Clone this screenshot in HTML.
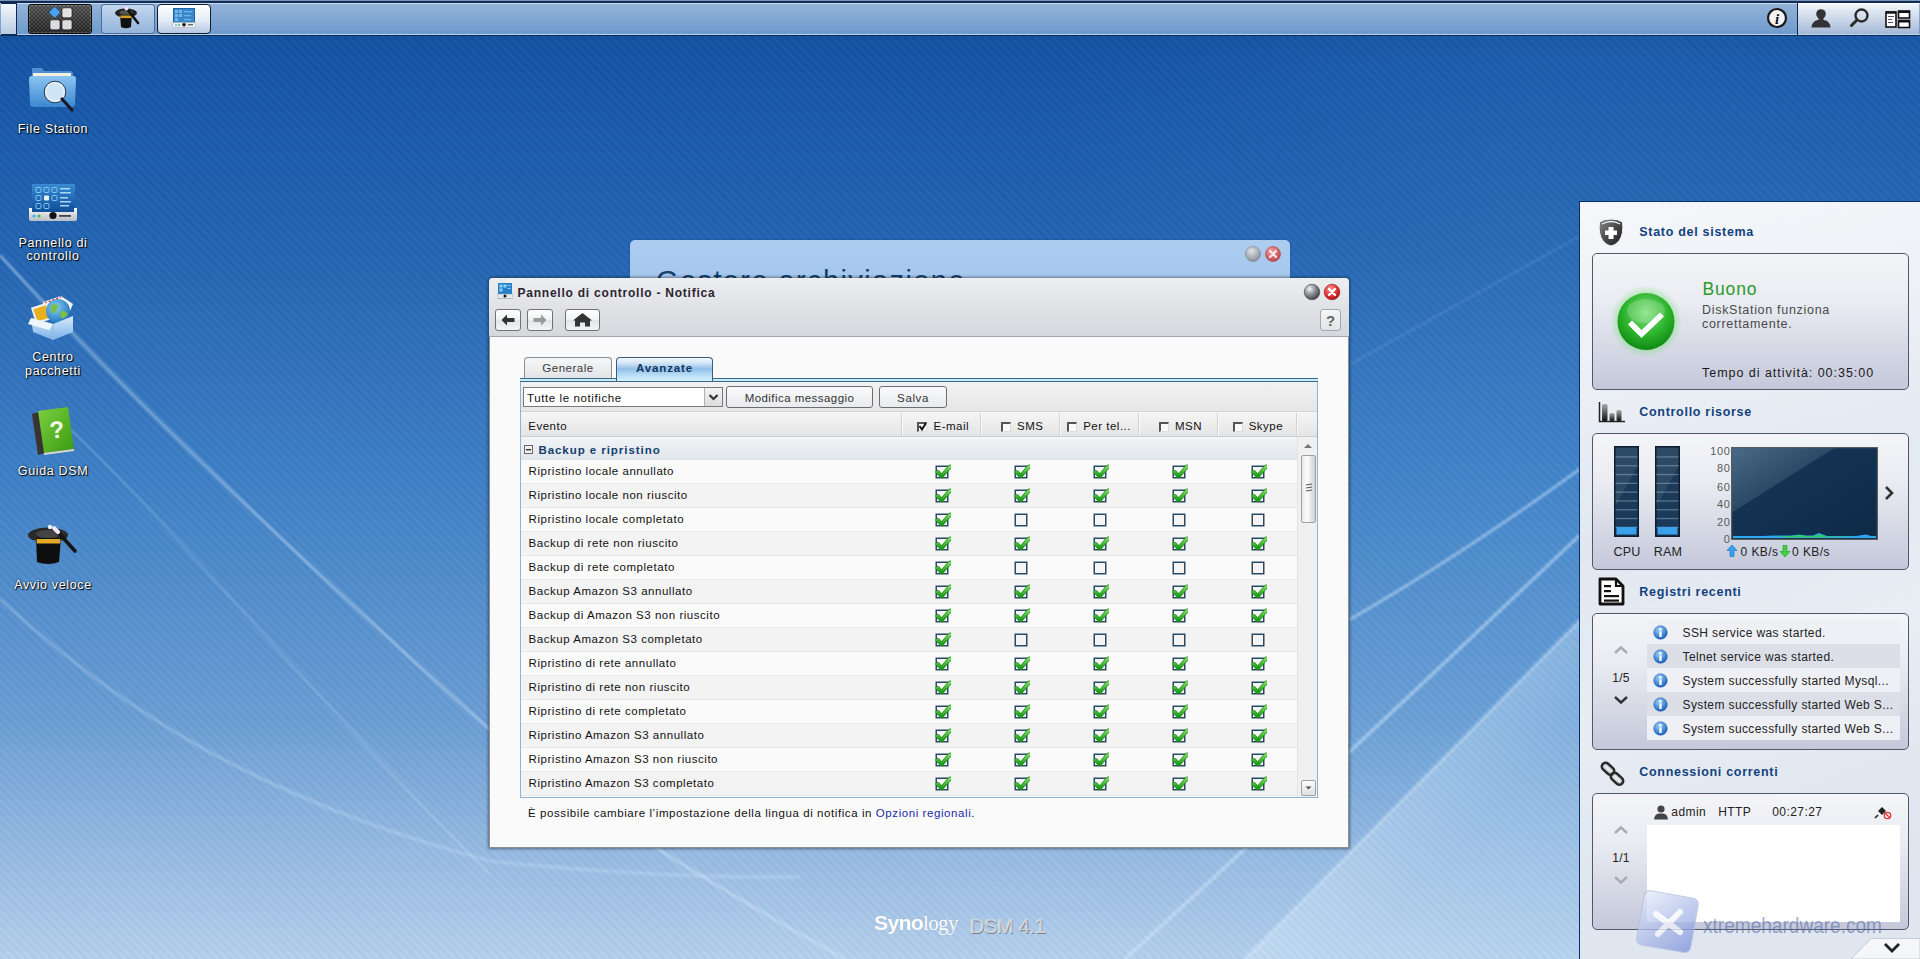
<!DOCTYPE html><html><head><meta charset="utf-8"><title>DSM</title><style>
*{margin:0;padding:0;box-sizing:border-box}
html,body{width:1920px;height:959px;overflow:hidden}
body{position:relative;font-family:"Liberation Sans",sans-serif;
background:linear-gradient(180deg,#0d4a96 0px,#1555a6 60px,#2364b2 250px,#3e80c6 480px,#6a9ed4 720px,#9cbee4 870px,#b4d0ec 959px);}
.t{position:absolute;white-space:nowrap}
.b{position:absolute}
.dl{color:#fff;text-shadow:0 0 2px #000,1px 1px 1px #000}
</style></head><body>
<svg class="b" style="left:0px;top:0px;pointer-events:none" width="1920" height="959" viewBox="0 0 1920 959"><defs><linearGradient id="beam" gradientUnits="userSpaceOnUse" x1="1412" y1="789" x2="1560" y2="937"><stop offset="0" stop-color="#e4f2ff" stop-opacity=".34"/><stop offset=".35" stop-color="#e4f2ff" stop-opacity=".2"/><stop offset="1" stop-color="#e4f2ff" stop-opacity=".14"/></linearGradient><filter id="bl" x="-10%" y="-10%" width="120%" height="120%"><feGaussianBlur stdDeviation="1.2"/></filter></defs><g filter="url(#bl)"><path d="M0,255 Q154,428 490,730 Q620,835 845,959" stroke="#d8ecff" stroke-opacity=".45" stroke-width="3" fill="none"/><path d="M0,599 C120,710 260,800 490,861 Q650,878 800,877" stroke="#d8ecff" stroke-opacity=".3" stroke-width="3" fill="none"/><path d="M60,420 C150,500 330,715 490,875" stroke="#d8ecff" stroke-opacity=".2" stroke-width="2.5" fill="none"/><path d="M1349,365 L1580,236" stroke="#d8ecff" stroke-opacity=".15" stroke-width="2" fill="none"/><path d="M1349,620 Q1460,556 1580,469" stroke="#d8ecff" stroke-opacity=".5" stroke-width="3" fill="none"/><path d="M1125,959 Q1300,800 1580,535" stroke="#d8ecff" stroke-opacity=".5" stroke-width="3.5" fill="none"/><path d="M1245,959 L1580,620" stroke="#e4f2ff" stroke-opacity=".3" stroke-width="4" fill="none"/></g><path d="M1245,959 L1580,620 L1580,959 Z" fill="url(#beam)"/></svg>
<div class="b" style="left:0px;top:36px;width:1920px;height:923px;background:repeating-linear-gradient(45deg,rgba(0,0,0,.022) 0 3px,rgba(255,255,255,.022) 3px 6px)"></div>
<div class="b" style="left:0px;top:36px;width:1920px;height:923px;background:linear-gradient(90deg,rgba(255,255,255,0) 0,rgba(255,255,255,0) 55%,rgba(120,200,255,.07) 80%,rgba(120,200,255,.05) 100%)"></div>
<div class="b" style="left:0px;top:0px;width:1920px;height:36px;background:linear-gradient(180deg,#7d94b6 0,#7d94b6 1px,#0f2c55 1px,#0f2c55 3px,#c8dcf2 3px,#c8dcf2 4px,#94b2d8 4px,#6e9bcc 34px,#b6d0ee 34px,#b6d0ee 35px,#0c2c5a 35px,#0c2c5a 36px)"></div>
<div class="b" style="left:1px;top:3px;width:16px;height:32px;background:linear-gradient(180deg,#f4f8fc,#d6e2f0 50%,#b8cce4);border:1px solid #0e2a50;border-left:0"></div>
<div class="b" style="left:28px;top:4px;width:64px;height:30px;background:linear-gradient(180deg,rgba(255,255,255,.15),rgba(0,0,0,.2)),repeating-conic-gradient(#4a4a4a 0 25%,#262626 0 50%) 0 0/4px 4px;border:1px solid #0a0a0a;border-radius:3px;box-shadow:inset 0 0 0 1px rgba(255,255,255,.15)"></div>
<svg class="b" style="left:46px;top:5px;" width="30" height="28" viewBox="0 0 30 28"><rect x="4.35" y="3.05" width="8.5" height="8.5" rx="1" transform="rotate(45 8.6 7.3)" fill="#4aa0f0" stroke="#1a3a5a" stroke-width=".6"/><rect x="16" y="2.8" width="10" height="10" rx="2" fill="#e2e2e4" stroke="#111" stroke-width=".6"/><rect x="4" y="14.8" width="10" height="10" rx="2" fill="#dcdcde" stroke="#111" stroke-width=".6"/><rect x="16" y="14.8" width="10" height="10" rx="2" fill="#dcdcde" stroke="#111" stroke-width=".6"/></svg>
<div class="b" style="left:101px;top:4px;width:54px;height:30px;background:linear-gradient(180deg,#c4d6ee,#94b4dc);border:1px solid #4a6c9c;border-radius:3px"></div>
<div class="b" style="left:157px;top:4px;width:54px;height:30px;background:linear-gradient(180deg,#ffffff,#e4ecf6 55%,#b4c8e4);border:1.5px solid #101c30;border-radius:4px"></div>
<div class="b" style="left:1797px;top:3px;width:1px;height:32px;background:#0f2c55"></div>
<div class="b" style="left:1798px;top:3px;width:121px;height:31px;background:linear-gradient(180deg,#f0f4fa,#c8d4e6 55%,#a4b8d8);border-top:1px solid #fff"></div>
<svg class="b" style="left:111px;top:3px;" width="34" height="28" viewBox="0 0 34 28"><ellipse cx="15" cy="10" rx="11" ry="4.5" fill="#222"/><ellipse cx="15" cy="9.5" rx="6.5" ry="2.3" fill="#555"/><path d="M9,12 L21,12 L20,24 Q15,26.5 10,24 Z" fill="#111"/><rect x="9.3" y="12.5" width="11.5" height="2.6" fill="#d8a020"/><path d="M16,6 L27,20" stroke="#111" stroke-width="2.6" stroke-linecap="round"/><circle cx="15.5" cy="5.5" r="2" fill="#f0e0ff"/></svg>
<svg class="b" style="left:170px;top:7px;" width="28" height="22" viewBox="0 0 28 22"><rect x="3" y="1" width="22" height="16" fill="#1e64ac"/><rect x="4" y="2" width="20" height="14" fill="#3a88cc"/><g fill="#8ccaf0" opacity=".7"><rect x="5" y="3" width="3" height="3"/><rect x="9" y="3" width="3" height="3"/><rect x="5" y="7" width="3" height="3"/><rect x="9" y="7" width="3" height="3"/><rect x="5" y="11" width="3" height="3"/><rect x="14" y="4" width="8" height="1.2"/><rect x="14" y="8" width="7" height="1.2"/><rect x="14" y="12" width="7" height="1.2"/></g><rect x="2.5" y="15.5" width="23" height="5" rx="1" fill="#eceff2" stroke="#a0a8b0" stroke-width=".5"/><circle cx="14" cy="17.8" r="1.8" fill="#111"/><circle cx="6" cy="18" r=".9" fill="#4ab0e8"/><circle cx="9" cy="18" r=".9" fill="#40c040"/><rect x="18" y="17.3" width="5" height="1" fill="#333"/></svg>
<svg class="b" style="left:1766px;top:7px;" width="22" height="22" viewBox="0 0 22 22"><circle cx="11" cy="11" r="9" fill="#f4f4f4" stroke="#1a1a1a" stroke-width="2.2"/><text x="11" y="16.5" text-anchor="middle" font-family="Liberation Serif" font-style="italic" font-weight="bold" font-size="15" fill="#111">i</text></svg>
<svg class="b" style="left:1810px;top:7px;" width="22" height="22" viewBox="0 0 22 22"><circle cx="11" cy="7" r="4.8" fill="#333"/><path d="M1.5,20.5 Q2,14 8,13 L14,13 Q20,14 20.5,20.5 Z" fill="#333"/><rect x="8.5" y="10" width="5" height="4" fill="#333"/></svg>
<svg class="b" style="left:1848px;top:7px;" width="24" height="22" viewBox="0 0 24 22"><circle cx="13.5" cy="8.5" r="6" fill="none" stroke="#2a2a2a" stroke-width="2.4"/><path d="M9.2,12.8 L3.5,18.5" stroke="#2a2a2a" stroke-width="3" stroke-linecap="round"/></svg>
<svg class="b" style="left:1885px;top:10px;" width="26" height="19" viewBox="0 0 26 19"><rect x="1" y="2" width="10" height="15" fill="#fff" stroke="#111" stroke-width="1.6"/><rect x="1" y="1.5" width="10" height="2.2" fill="#111"/><rect x="13.5" y="1" width="11" height="7" fill="#fff" stroke="#111" stroke-width="1.6"/><rect x="13.5" y="1" width="11" height="2" fill="#111"/><rect x="13.5" y="10.5" width="11" height="7" fill="#fff" stroke="#111" stroke-width="1.6"/><rect x="13.5" y="10.5" width="11" height="2" fill="#111"/><g fill="#555"><rect x="3" y="6" width="6" height="1"/><rect x="3" y="9" width="4" height="1"/><rect x="3" y="12" width="5" height="1"/></g></svg>
<svg class="b" style="left:26px;top:64px;" width="56" height="50" viewBox="0 0 56 50"><defs><linearGradient id="fold" x1="0" y1="0" x2="0" y2="1"><stop offset="0" stop-color="#8cc4f0"/><stop offset="1" stop-color="#3c88d0"/></linearGradient></defs><path d="M6,4 L16,4 L18,7 L44,7 Q47,7 47,10 L47,14 L6,14 Z" fill="#4c8ed0"/><rect x="7" y="9" width="38" height="8" fill="#f4f0e0"/><path d="M3,15 Q3,12 6,12 L47,12 Q50,12 50,15 L49,40 Q49,43 46,43 L7,43 Q4,43 4,40 Z" fill="url(#fold)"/><circle cx="29" cy="28" r="9.5" fill="#cfe4f6" stroke="#e8eef4" stroke-width="2.2"/><circle cx="29" cy="28" r="10.8" fill="none" stroke="#2a3a50" stroke-width="1"/><path d="M36,35 L46,46" stroke="#1a1a24" stroke-width="3.2" stroke-linecap="round"/></svg>
<div class="t" style="left:53px;transform:translateX(-50%);top:122.92px;font-size:12.5px;line-height:12.5px;color:#fff;letter-spacing:0.65px;text-shadow:1px 1px 1px #000,0 0 2px rgba(0,0,0,.8)">File Station</div>
<svg class="b" style="left:27px;top:182px;" width="52" height="42" viewBox="0 0 52 42"><defs><linearGradient id="cps" x1="0" y1="0" x2="0" y2="1"><stop offset="0" stop-color="#3a8ad4"/><stop offset="1" stop-color="#0e4e98"/></linearGradient><linearGradient id="cpb" x1="0" y1="0" x2="0" y2="1"><stop offset="0" stop-color="#fafafa"/><stop offset="1" stop-color="#b8bcc4"/></linearGradient></defs><rect x="5" y="2" width="43" height="28" fill="url(#cps)"/><g fill="none" stroke="#7cc8f0" stroke-width="1"><rect x="9" y="5.5" width="5" height="5" rx="1"/><rect x="17" y="5.5" width="5" height="5" rx="1"/><rect x="25" y="5.5" width="5" height="5" rx="1"/><rect x="9" y="13.5" width="5" height="5" rx="1"/><rect x="25" y="13.5" width="5" height="5" rx="1"/><rect x="9" y="21.5" width="5" height="5" rx="1"/><rect x="17" y="21.5" width="5" height="5" rx="1"/></g><rect x="17" y="13.5" width="5" height="5" rx="1" fill="#e8f4f0"/><g fill="#a8d8f8"><rect x="33" y="6" width="10" height="1.5"/><rect x="33" y="10" width="11" height="1.5"/><rect x="33" y="15" width="8" height="1.5"/><rect x="33" y="19" width="11" height="1.5"/><rect x="33" y="23" width="9" height="1.5"/></g><path d="M2,26 L2,37 Q2,39 4,39 L48,39 Q50,39 50,37 L50,26 L47,26 L47,30 L5,30 L5,26 Z" fill="url(#cpb)"/><circle cx="26" cy="33.5" r="3.6" fill="#111"/><circle cx="7" cy="34" r="1.6" fill="#40b0f0"/><circle cx="12" cy="34" r="1.6" fill="#40c040"/><rect x="32" y="33" width="12" height="1.8" fill="#444"/></svg>
<div class="t" style="left:53px;transform:translateX(-50%);top:236.92px;font-size:12.5px;line-height:12.5px;color:#fff;letter-spacing:0.65px;text-shadow:1px 1px 1px #000,0 0 2px rgba(0,0,0,.8)">Pannello di</div>
<div class="t" style="left:53px;transform:translateX(-50%);top:250.42px;font-size:12.5px;line-height:12.5px;color:#fff;letter-spacing:0.65px;text-shadow:1px 1px 1px #000,0 0 2px rgba(0,0,0,.8)">controllo</div>
<svg class="b" style="left:27px;top:292px;" width="52" height="52" viewBox="0 0 52 52"><defs><radialGradient id="glb" cx=".4" cy=".35" r=".7"><stop offset="0" stop-color="#8ad0f0"/><stop offset="1" stop-color="#1a70c0"/></radialGradient><linearGradient id="bx" x1="0" y1="0" x2="0" y2="1"><stop offset="0" stop-color="#d8ecfc"/><stop offset="1" stop-color="#7ab0e8"/></linearGradient></defs><path d="M16,10 L34,4 L46,12 L40,26 L20,26 Z" fill="#f4f4f4"/><path d="M18,11 L34,5" stroke="#c83030" stroke-width="1.5" stroke-dasharray="2 2"/><rect x="6" y="13" width="17" height="17" transform="rotate(-18 14 21)" fill="#f0f0f0"/><rect x="8" y="15" width="13" height="13" transform="rotate(-18 14 21)" fill="#e8b020"/><circle cx="31" cy="19" r="12" fill="url(#glb)"/><path d="M24,14 Q28,10 31,14 Q30,20 25,22 Z M33,20 Q38,17 41,22 Q38,27 34,26 Z" fill="#7cc040"/><path d="M4,26 L26,32 L46,24 L46,40 L26,48 L6,40 Z" fill="url(#bx)"/><path d="M26,32 L26,48" stroke="#90b8e0" stroke-width="1"/><path d="M4,26 L26,32 L22,38 L1,32 Z" fill="#eef6fe"/></svg>
<div class="t" style="left:53px;transform:translateX(-50%);top:351.42px;font-size:12.5px;line-height:12.5px;color:#fff;letter-spacing:0.65px;text-shadow:1px 1px 1px #000,0 0 2px rgba(0,0,0,.8)">Centro</div>
<div class="t" style="left:53px;transform:translateX(-50%);top:364.92px;font-size:12.5px;line-height:12.5px;color:#fff;letter-spacing:0.65px;text-shadow:1px 1px 1px #000,0 0 2px rgba(0,0,0,.8)">pacchetti</div>
<svg class="b" style="left:30px;top:405px;" width="46" height="52" viewBox="0 0 46 52"><defs><linearGradient id="bk" x1="0" y1="0" x2="1" y2="1"><stop offset="0" stop-color="#7cd040"/><stop offset="1" stop-color="#3a9a10"/></linearGradient></defs><path d="M2,9 L9,7 L15,48 L8,50 Z" fill="#3a3430"/><path d="M8,6 L38,2 L44,44 L14,48 Z" fill="url(#bk)"/><path d="M14,48 L44,44 L44,46 L14,50 Z" fill="#d8d8d0"/><text x="27" y="33" text-anchor="middle" font-family="Liberation Sans" font-weight="bold" font-size="24" fill="#f4fce8" transform="rotate(-6 27 25)">?</text></svg>
<div class="t" style="left:53px;transform:translateX(-50%);top:464.62px;font-size:12.5px;line-height:12.5px;color:#fff;letter-spacing:0.65px;text-shadow:1px 1px 1px #000,0 0 2px rgba(0,0,0,.8)">Guida DSM</div>
<svg class="b" style="left:26px;top:520px;" width="54" height="50" viewBox="0 0 54 50"><ellipse cx="22" cy="15" rx="20" ry="7.5" fill="#2a2a2a"/><ellipse cx="22" cy="14" rx="12" ry="4" fill="#444"/><path d="M10,18 L35,18 L33,42 Q22,46 11,42 Z" fill="#0e0e0e"/><path d="M10.5,19 L34.5,19 L34.2,23.5 L10.8,23.5 Z" fill="#e0a828"/><path d="M29,9 L49,31" stroke="#151515" stroke-width="3.6" stroke-linecap="round"/><path d="M28,8 L32,12" stroke="#f0e8ff" stroke-width="4" stroke-linecap="round"/><circle cx="24" cy="7" r="2.2" fill="#fff" opacity=".9"/></svg>
<div class="t" style="left:53px;transform:translateX(-50%);top:579.32px;font-size:12.5px;line-height:12.5px;color:#fff;letter-spacing:0.65px;text-shadow:1px 1px 1px #000,0 0 2px rgba(0,0,0,.8)">Avvio veloce</div>
<div class="t" style="left:874px;top:912.22px;font-size:21px;line-height:21px;color:#fff;letter-spacing:-0.6px;text-shadow:0 0 1px rgba(0,0,0,.2)"><span style="font-weight:bold">Syno</span><span style="font-family:'Liberation Serif'">logy</span></div>
<div class="t" style="left:970px;top:915.57px;font-size:20px;line-height:20px;color:#cdd1d6;letter-spacing:-0.3px;text-shadow:0.6px 0.8px 0 #76808c,-0.4px -0.4px 0 #f4f6f8">DSM 4.1</div>
<div class="b" style="left:630px;top:240px;width:660px;height:60px;background:linear-gradient(180deg,#accdf0,#a2c4ec);border-radius:5px 5px 0 0;box-shadow:0 0 2px rgba(0,0,0,.3);overflow:hidden"></div>
<div class="t" style="left:656px;top:267.45px;font-size:29px;line-height:29px;color:#14406e;letter-spacing:1.4px;">Gestore archiviazione</div>
<svg class="b" style="left:1244px;top:245px;" width="38" height="18" viewBox="0 0 38 18"><defs><radialGradient id="gb2" cx=".4" cy=".3" r=".7"><stop offset="0" stop-color="#e0e4e8"/><stop offset="1" stop-color="#8a9098"/></radialGradient><radialGradient id="rb2" cx=".4" cy=".3" r=".7"><stop offset="0" stop-color="#f0a0a0"/><stop offset="1" stop-color="#c04848"/></radialGradient></defs><circle cx="9" cy="9" r="7.5" fill="url(#gb2)" stroke="#7a8088" stroke-width=".6"/><circle cx="29" cy="9" r="7.5" fill="url(#rb2)" stroke="#b04040" stroke-width=".6"/><path d="M26,6 L32,12 M32,6 L26,12" stroke="#fde8e8" stroke-width="2.2" stroke-linecap="round"/></svg>
<div class="b" style="left:489px;top:278px;width:860px;height:570px;background:#fafafa;border-radius:4px 4px 0 0;box-shadow:0 0 3px 1px rgba(0,0,0,.42);border:1px solid #8a9096;border-top:0"></div>
<div class="b" style="left:489px;top:278px;width:860px;height:59px;background:linear-gradient(180deg,#eceef0 0,#e4e6e9 20px,#d4d8dc 58px);border-radius:4px 4px 0 0;border-bottom:1px solid #a4a8ac"></div>
<svg class="b" style="left:497px;top:283px;" width="16" height="16" viewBox="0 0 16 16"><rect x="1" y="0" width="14" height="11" fill="#2a80c8"/><g fill="#8ad4f8"><rect x="2.5" y="1.5" width="3" height="3"/><rect x="6.5" y="1.5" width="3" height="3"/><rect x="2.5" y="5.5" width="3" height="3"/><rect x="10.5" y="2" width="3" height="1"/><rect x="10.5" y="5" width="3" height="1"/></g><rect x="0" y="11" width="16" height="4.5" fill="#e4e8ec" stroke="#8a949e" stroke-width=".5"/><circle cx="8" cy="13" r="1.5" fill="#111"/></svg>
<div class="t" style="left:517.5px;top:286.84px;font-size:12px;line-height:12px;color:#2c2430;font-weight:bold;letter-spacing:0.77px;">Pannello di controllo - Notifica</div>
<svg class="b" style="left:1303px;top:283px;" width="40" height="18" viewBox="0 0 40 18"><defs><radialGradient id="gb" cx=".35" cy=".3" r=".75"><stop offset="0" stop-color="#f4f4f4"/><stop offset=".5" stop-color="#8a8e92"/><stop offset="1" stop-color="#3a3e42"/></radialGradient><radialGradient id="rb" cx=".4" cy=".3" r=".75"><stop offset="0" stop-color="#ff9a9a"/><stop offset=".6" stop-color="#e03030"/><stop offset="1" stop-color="#a01010"/></radialGradient></defs><circle cx="9" cy="9" r="7.8" fill="url(#gb)" stroke="#404448" stroke-width=".6"/><circle cx="29" cy="9" r="7.8" fill="url(#rb)" stroke="#901010" stroke-width=".6"/><path d="M26,6 L32,12 M32,6 L26,12" stroke="#fff" stroke-width="2.4" stroke-linecap="round"/></svg>
<div class="b" style="left:495px;top:309px;width:26px;height:22px;background:linear-gradient(180deg,#ffffff,#f0f2f4 50%,#e2e5e8 51%,#f2f4f6);border:1px solid #6e7276;border-radius:3px"></div>
<svg class="b" style="left:495px;top:309px;" width="26" height="22" viewBox="0 0 26 22"><path d="M6.5,11 L12,5.5 L12,9 L19.5,9 L19.5,13 L12,13 L12,16.5 Z" fill="#333"/></svg>
<div class="b" style="left:527px;top:309px;width:26px;height:22px;background:linear-gradient(180deg,#ffffff,#f0f2f4 50%,#e2e5e8 51%,#f2f4f6);border:1px solid #6e7276;border-radius:3px"></div>
<svg class="b" style="left:527px;top:309px;" width="26" height="22" viewBox="0 0 26 22"><path d="M19.5,11 L14,5.5 L14,9 L6.5,9 L6.5,13 L14,13 L14,16.5 Z" fill="#9a9a9a"/></svg>
<div class="b" style="left:565px;top:309px;width:35px;height:22px;background:linear-gradient(180deg,#ffffff,#f0f2f4 50%,#e2e5e8 51%,#f2f4f6);border:1px solid #6e7276;border-radius:3px"></div>
<svg class="b" style="left:565px;top:309px;" width="35" height="22" viewBox="0 0 35 22"><path d="M8,11.5 L17.5,4 L27,11.5 L25,11.5 L25,17.5 L20,17.5 L20,13.5 L15,13.5 L15,17.5 L10,17.5 L10,11.5 Z" fill="#333"/></svg>
<div class="b" style="left:1320px;top:309px;width:21px;height:22px;background:linear-gradient(180deg,#f4f5f6,#e2e4e7);border:1px solid #a4a8ac;border-radius:3px"></div>
<svg class="b" style="left:1320px;top:309px;" width="21" height="22" viewBox="0 0 21 22"><text x="10.5" y="16.5" text-anchor="middle" font-family="Liberation Sans" font-weight="bold" font-size="15" fill="#666">?</text></svg>
<div class="b" style="left:524px;top:357px;width:88px;height:22px;background:linear-gradient(180deg,#f6f7f8,#e0e3e6);border:1px solid #8a8e92;border-bottom:0;border-radius:4px 4px 0 0"></div>
<div class="t" style="left:568px;transform:translateX(-50%);top:363.07px;font-size:11.5px;line-height:11.5px;color:#3a3a3a;letter-spacing:0.5px;">Generale</div>
<div class="b" style="left:520px;top:378px;width:798px;height:4px;background:linear-gradient(180deg,#3a6888 0,#3a6888 1px,#c4ecfc 1px,#c4ecfc 3px,#3a6888 3px)"></div>
<div class="b" style="left:616px;top:357px;width:97px;height:24px;background:linear-gradient(180deg,#f4f9fe 0,#d4e6f6 5px,#92bfe8 11px,#b8dcf6 17px,#d4f0fe 23px);border:1px solid #3a5c7a;border-bottom:0;border-radius:4px 4px 0 0"></div>
<div class="t" style="left:664.5px;transform:translateX(-50%);top:363.07px;font-size:11.5px;line-height:11.5px;color:#10365e;font-weight:bold;letter-spacing:0.85px;">Avanzate</div>
<div class="b" style="left:520px;top:382px;width:798px;height:416px;background:#fafafa;border-left:1px solid #8cb4d8;border-right:1px solid #8cb4d8;border-bottom:1px solid #8cb4d8"></div>
<div class="b" style="left:521px;top:382px;width:796px;height:30px;background:linear-gradient(180deg,#f2f2f2,#e6e6e6);border-bottom:1px solid #d4d4d4"></div>
<div class="b" style="left:523px;top:387px;width:200px;height:20px;background:#fff;border:1px solid #7a7a7a"></div>
<div class="b" style="left:704px;top:388px;width:18px;height:18px;background:linear-gradient(180deg,#f4f4f4,#dcdcdc);border-left:1px solid #b0b0b0"></div>
<svg class="b" style="left:705px;top:388px;" width="17" height="18" viewBox="0 0 17 18"><path d="M4.5,7 L8.5,11 L12.5,7" fill="none" stroke="#333" stroke-width="2.2"/></svg>
<div class="t" style="left:527px;top:393.37px;font-size:11.5px;line-height:11.5px;color:#111;letter-spacing:0.6px;">Tutte le notifiche</div>
<div class="b" style="left:726px;top:386px;width:147px;height:22px;background:linear-gradient(180deg,#fafafa,#e8eaec);border:1px solid #6a6e72;border-radius:3px"></div>
<div class="t" style="left:799.5px;transform:translateX(-50%);top:393.07px;font-size:11.5px;line-height:11.5px;color:#333;letter-spacing:0.45px;">Modifica messaggio</div>
<div class="b" style="left:879px;top:386px;width:68px;height:22px;background:linear-gradient(180deg,#fafafa,#e8eaec);border:1px solid #6a6e72;border-radius:3px"></div>
<div class="t" style="left:913px;transform:translateX(-50%);top:393.07px;font-size:11.5px;line-height:11.5px;color:#333;letter-spacing:0.6px;">Salva</div>
<div class="b" style="left:521px;top:412px;width:796px;height:25px;background:linear-gradient(180deg,#f6f6f6,#e4e4e4);border-bottom:1px solid #cfcfcf"></div>
<div class="b" style="left:901px;top:413px;width:1px;height:23px;background:#d2d2d2;box-shadow:1px 0 0 #fafafa"></div>
<div class="b" style="left:980px;top:413px;width:1px;height:23px;background:#d2d2d2;box-shadow:1px 0 0 #fafafa"></div>
<div class="b" style="left:1059px;top:413px;width:1px;height:23px;background:#d2d2d2;box-shadow:1px 0 0 #fafafa"></div>
<div class="b" style="left:1138px;top:413px;width:1px;height:23px;background:#d2d2d2;box-shadow:1px 0 0 #fafafa"></div>
<div class="b" style="left:1217px;top:413px;width:1px;height:23px;background:#d2d2d2;box-shadow:1px 0 0 #fafafa"></div>
<div class="b" style="left:1296px;top:413px;width:1px;height:23px;background:#d2d2d2;box-shadow:1px 0 0 #fafafa"></div>
<div class="t" style="left:528.3px;top:420.87px;font-size:11.5px;line-height:11.5px;color:#111;letter-spacing:0.5px;">Evento</div>
<div class="b" style="left:917px;top:422px;width:10px;height:10px;background:#fafafa;border-top:2px solid #555;border-left:2px solid #555;border-right:1px solid #ddd;border-bottom:1px solid #ddd"></div>
<svg class="b" style="left:917px;top:421px;" width="11" height="11" viewBox="0 0 11 11"><path d="M2.5,5 L5,8.5 L9,2" fill="none" stroke="#111" stroke-width="2"/></svg>
<div class="t" style="left:933.5px;top:420.87px;font-size:11.5px;line-height:11.5px;color:#111;letter-spacing:0.5px;">E-mail</div>
<div class="b" style="left:1001px;top:422px;width:10px;height:10px;background:#fafafa;border-top:2px solid #555;border-left:2px solid #555;border-right:1px solid #ddd;border-bottom:1px solid #ddd"></div>
<div class="t" style="left:1017px;top:420.87px;font-size:11.5px;line-height:11.5px;color:#111;letter-spacing:0.5px;">SMS</div>
<div class="b" style="left:1067px;top:422px;width:10px;height:10px;background:#fafafa;border-top:2px solid #555;border-left:2px solid #555;border-right:1px solid #ddd;border-bottom:1px solid #ddd"></div>
<div class="t" style="left:1083.2px;top:420.87px;font-size:11.5px;line-height:11.5px;color:#111;letter-spacing:0.5px;">Per tel...</div>
<div class="b" style="left:1158.7px;top:422px;width:10px;height:10px;background:#fafafa;border-top:2px solid #555;border-left:2px solid #555;border-right:1px solid #ddd;border-bottom:1px solid #ddd"></div>
<div class="t" style="left:1175px;top:420.87px;font-size:11.5px;line-height:11.5px;color:#111;letter-spacing:0.5px;">MSN</div>
<div class="b" style="left:1233px;top:422px;width:10px;height:10px;background:#fafafa;border-top:2px solid #555;border-left:2px solid #555;border-right:1px solid #ddd;border-bottom:1px solid #ddd"></div>
<div class="t" style="left:1248.7px;top:420.87px;font-size:11.5px;line-height:11.5px;color:#111;letter-spacing:0.5px;">Skype</div>
<div class="b" style="left:521px;top:437px;width:776px;height:23px;background:linear-gradient(180deg,#f2f5f8,#e0e5ea)"></div>
<svg class="b" style="left:524px;top:445px;" width="10" height="10" viewBox="0 0 10 10"><rect x=".5" y=".5" width="8" height="8" fill="#f0f0f0" stroke="#666" stroke-width="1"/><rect x="2" y="4" width="5" height="1.4" fill="#333"/></svg>
<div class="t" style="left:538.4px;top:445.17px;font-size:11.5px;line-height:11.5px;color:#14406e;font-weight:bold;letter-spacing:0.95px;">Backup e ripristino</div>
<svg width="0" height="0" style="position:absolute"><defs><linearGradient id="cg" x1="0" y1="0" x2="0" y2="1"><stop offset="0" stop-color="#7ee060"/><stop offset="1" stop-color="#1a9a18"/></linearGradient></defs></svg>
<div class="b" style="left:521px;top:460px;width:776px;height:24px;background:#fafafa;border-bottom:1px solid #e8e8e8"></div>
<div class="t" style="left:528.6px;top:466.27px;font-size:11.5px;line-height:11.5px;color:#111;letter-spacing:0.53px;">Ripristino locale annullato</div>
<svg class="b" style="left:935.0px;top:463px;" width="16" height="16" viewBox="0 0 16 16"><rect x="1.25" y="3.25" width="11.5" height="11.5" fill="#f4f4f4" stroke="#2a4a64" stroke-width="1.5"/><path d="M2.6,9 L6.6,13.2 L15,3.6" fill="none" stroke="#1c8e1a" stroke-width="4" stroke-linejoin="round" stroke-linecap="round"/><path d="M2.6,9 L6.6,13.2 L15,3.6" fill="none" stroke="url(#cg)" stroke-width="2.6" stroke-linejoin="round" stroke-linecap="round"/></svg>
<svg class="b" style="left:1014.0px;top:463px;" width="16" height="16" viewBox="0 0 16 16"><rect x="1.25" y="3.25" width="11.5" height="11.5" fill="#f4f4f4" stroke="#2a4a64" stroke-width="1.5"/><path d="M2.6,9 L6.6,13.2 L15,3.6" fill="none" stroke="#1c8e1a" stroke-width="4" stroke-linejoin="round" stroke-linecap="round"/><path d="M2.6,9 L6.6,13.2 L15,3.6" fill="none" stroke="url(#cg)" stroke-width="2.6" stroke-linejoin="round" stroke-linecap="round"/></svg>
<svg class="b" style="left:1093.0px;top:463px;" width="16" height="16" viewBox="0 0 16 16"><rect x="1.25" y="3.25" width="11.5" height="11.5" fill="#f4f4f4" stroke="#2a4a64" stroke-width="1.5"/><path d="M2.6,9 L6.6,13.2 L15,3.6" fill="none" stroke="#1c8e1a" stroke-width="4" stroke-linejoin="round" stroke-linecap="round"/><path d="M2.6,9 L6.6,13.2 L15,3.6" fill="none" stroke="url(#cg)" stroke-width="2.6" stroke-linejoin="round" stroke-linecap="round"/></svg>
<svg class="b" style="left:1172.0px;top:463px;" width="16" height="16" viewBox="0 0 16 16"><rect x="1.25" y="3.25" width="11.5" height="11.5" fill="#f4f4f4" stroke="#2a4a64" stroke-width="1.5"/><path d="M2.6,9 L6.6,13.2 L15,3.6" fill="none" stroke="#1c8e1a" stroke-width="4" stroke-linejoin="round" stroke-linecap="round"/><path d="M2.6,9 L6.6,13.2 L15,3.6" fill="none" stroke="url(#cg)" stroke-width="2.6" stroke-linejoin="round" stroke-linecap="round"/></svg>
<svg class="b" style="left:1251.0px;top:463px;" width="16" height="16" viewBox="0 0 16 16"><rect x="1.25" y="3.25" width="11.5" height="11.5" fill="#f4f4f4" stroke="#2a4a64" stroke-width="1.5"/><path d="M2.6,9 L6.6,13.2 L15,3.6" fill="none" stroke="#1c8e1a" stroke-width="4" stroke-linejoin="round" stroke-linecap="round"/><path d="M2.6,9 L6.6,13.2 L15,3.6" fill="none" stroke="url(#cg)" stroke-width="2.6" stroke-linejoin="round" stroke-linecap="round"/></svg>
<div class="b" style="left:521px;top:484px;width:776px;height:24px;background:#f3f3f3;border-bottom:1px solid #e8e8e8"></div>
<div class="t" style="left:528.6px;top:490.27px;font-size:11.5px;line-height:11.5px;color:#111;letter-spacing:0.53px;">Ripristino locale non riuscito</div>
<svg class="b" style="left:935.0px;top:487px;" width="16" height="16" viewBox="0 0 16 16"><rect x="1.25" y="3.25" width="11.5" height="11.5" fill="#f4f4f4" stroke="#2a4a64" stroke-width="1.5"/><path d="M2.6,9 L6.6,13.2 L15,3.6" fill="none" stroke="#1c8e1a" stroke-width="4" stroke-linejoin="round" stroke-linecap="round"/><path d="M2.6,9 L6.6,13.2 L15,3.6" fill="none" stroke="url(#cg)" stroke-width="2.6" stroke-linejoin="round" stroke-linecap="round"/></svg>
<svg class="b" style="left:1014.0px;top:487px;" width="16" height="16" viewBox="0 0 16 16"><rect x="1.25" y="3.25" width="11.5" height="11.5" fill="#f4f4f4" stroke="#2a4a64" stroke-width="1.5"/><path d="M2.6,9 L6.6,13.2 L15,3.6" fill="none" stroke="#1c8e1a" stroke-width="4" stroke-linejoin="round" stroke-linecap="round"/><path d="M2.6,9 L6.6,13.2 L15,3.6" fill="none" stroke="url(#cg)" stroke-width="2.6" stroke-linejoin="round" stroke-linecap="round"/></svg>
<svg class="b" style="left:1093.0px;top:487px;" width="16" height="16" viewBox="0 0 16 16"><rect x="1.25" y="3.25" width="11.5" height="11.5" fill="#f4f4f4" stroke="#2a4a64" stroke-width="1.5"/><path d="M2.6,9 L6.6,13.2 L15,3.6" fill="none" stroke="#1c8e1a" stroke-width="4" stroke-linejoin="round" stroke-linecap="round"/><path d="M2.6,9 L6.6,13.2 L15,3.6" fill="none" stroke="url(#cg)" stroke-width="2.6" stroke-linejoin="round" stroke-linecap="round"/></svg>
<svg class="b" style="left:1172.0px;top:487px;" width="16" height="16" viewBox="0 0 16 16"><rect x="1.25" y="3.25" width="11.5" height="11.5" fill="#f4f4f4" stroke="#2a4a64" stroke-width="1.5"/><path d="M2.6,9 L6.6,13.2 L15,3.6" fill="none" stroke="#1c8e1a" stroke-width="4" stroke-linejoin="round" stroke-linecap="round"/><path d="M2.6,9 L6.6,13.2 L15,3.6" fill="none" stroke="url(#cg)" stroke-width="2.6" stroke-linejoin="round" stroke-linecap="round"/></svg>
<svg class="b" style="left:1251.0px;top:487px;" width="16" height="16" viewBox="0 0 16 16"><rect x="1.25" y="3.25" width="11.5" height="11.5" fill="#f4f4f4" stroke="#2a4a64" stroke-width="1.5"/><path d="M2.6,9 L6.6,13.2 L15,3.6" fill="none" stroke="#1c8e1a" stroke-width="4" stroke-linejoin="round" stroke-linecap="round"/><path d="M2.6,9 L6.6,13.2 L15,3.6" fill="none" stroke="url(#cg)" stroke-width="2.6" stroke-linejoin="round" stroke-linecap="round"/></svg>
<div class="b" style="left:521px;top:508px;width:776px;height:24px;background:#fafafa;border-bottom:1px solid #e8e8e8"></div>
<div class="t" style="left:528.6px;top:514.27px;font-size:11.5px;line-height:11.5px;color:#111;letter-spacing:0.53px;">Ripristino locale completato</div>
<svg class="b" style="left:935.0px;top:511px;" width="16" height="16" viewBox="0 0 16 16"><rect x="1.25" y="3.25" width="11.5" height="11.5" fill="#f4f4f4" stroke="#2a4a64" stroke-width="1.5"/><path d="M2.6,9 L6.6,13.2 L15,3.6" fill="none" stroke="#1c8e1a" stroke-width="4" stroke-linejoin="round" stroke-linecap="round"/><path d="M2.6,9 L6.6,13.2 L15,3.6" fill="none" stroke="url(#cg)" stroke-width="2.6" stroke-linejoin="round" stroke-linecap="round"/></svg>
<svg class="b" style="left:1014.0px;top:511px;" width="16" height="16" viewBox="0 0 16 16"><rect x="1.25" y="3.25" width="11.5" height="11.5" fill="#f4f4f4" stroke="#2a4a64" stroke-width="1.5"/></svg>
<svg class="b" style="left:1093.0px;top:511px;" width="16" height="16" viewBox="0 0 16 16"><rect x="1.25" y="3.25" width="11.5" height="11.5" fill="#f4f4f4" stroke="#2a4a64" stroke-width="1.5"/></svg>
<svg class="b" style="left:1172.0px;top:511px;" width="16" height="16" viewBox="0 0 16 16"><rect x="1.25" y="3.25" width="11.5" height="11.5" fill="#f4f4f4" stroke="#2a4a64" stroke-width="1.5"/></svg>
<svg class="b" style="left:1251.0px;top:511px;" width="16" height="16" viewBox="0 0 16 16"><rect x="1.25" y="3.25" width="11.5" height="11.5" fill="#f4f4f4" stroke="#2a4a64" stroke-width="1.5"/></svg>
<div class="b" style="left:521px;top:532px;width:776px;height:24px;background:#f3f3f3;border-bottom:1px solid #e8e8e8"></div>
<div class="t" style="left:528.6px;top:538.27px;font-size:11.5px;line-height:11.5px;color:#111;letter-spacing:0.53px;">Backup di rete non riuscito</div>
<svg class="b" style="left:935.0px;top:535px;" width="16" height="16" viewBox="0 0 16 16"><rect x="1.25" y="3.25" width="11.5" height="11.5" fill="#f4f4f4" stroke="#2a4a64" stroke-width="1.5"/><path d="M2.6,9 L6.6,13.2 L15,3.6" fill="none" stroke="#1c8e1a" stroke-width="4" stroke-linejoin="round" stroke-linecap="round"/><path d="M2.6,9 L6.6,13.2 L15,3.6" fill="none" stroke="url(#cg)" stroke-width="2.6" stroke-linejoin="round" stroke-linecap="round"/></svg>
<svg class="b" style="left:1014.0px;top:535px;" width="16" height="16" viewBox="0 0 16 16"><rect x="1.25" y="3.25" width="11.5" height="11.5" fill="#f4f4f4" stroke="#2a4a64" stroke-width="1.5"/><path d="M2.6,9 L6.6,13.2 L15,3.6" fill="none" stroke="#1c8e1a" stroke-width="4" stroke-linejoin="round" stroke-linecap="round"/><path d="M2.6,9 L6.6,13.2 L15,3.6" fill="none" stroke="url(#cg)" stroke-width="2.6" stroke-linejoin="round" stroke-linecap="round"/></svg>
<svg class="b" style="left:1093.0px;top:535px;" width="16" height="16" viewBox="0 0 16 16"><rect x="1.25" y="3.25" width="11.5" height="11.5" fill="#f4f4f4" stroke="#2a4a64" stroke-width="1.5"/><path d="M2.6,9 L6.6,13.2 L15,3.6" fill="none" stroke="#1c8e1a" stroke-width="4" stroke-linejoin="round" stroke-linecap="round"/><path d="M2.6,9 L6.6,13.2 L15,3.6" fill="none" stroke="url(#cg)" stroke-width="2.6" stroke-linejoin="round" stroke-linecap="round"/></svg>
<svg class="b" style="left:1172.0px;top:535px;" width="16" height="16" viewBox="0 0 16 16"><rect x="1.25" y="3.25" width="11.5" height="11.5" fill="#f4f4f4" stroke="#2a4a64" stroke-width="1.5"/><path d="M2.6,9 L6.6,13.2 L15,3.6" fill="none" stroke="#1c8e1a" stroke-width="4" stroke-linejoin="round" stroke-linecap="round"/><path d="M2.6,9 L6.6,13.2 L15,3.6" fill="none" stroke="url(#cg)" stroke-width="2.6" stroke-linejoin="round" stroke-linecap="round"/></svg>
<svg class="b" style="left:1251.0px;top:535px;" width="16" height="16" viewBox="0 0 16 16"><rect x="1.25" y="3.25" width="11.5" height="11.5" fill="#f4f4f4" stroke="#2a4a64" stroke-width="1.5"/><path d="M2.6,9 L6.6,13.2 L15,3.6" fill="none" stroke="#1c8e1a" stroke-width="4" stroke-linejoin="round" stroke-linecap="round"/><path d="M2.6,9 L6.6,13.2 L15,3.6" fill="none" stroke="url(#cg)" stroke-width="2.6" stroke-linejoin="round" stroke-linecap="round"/></svg>
<div class="b" style="left:521px;top:556px;width:776px;height:24px;background:#fafafa;border-bottom:1px solid #e8e8e8"></div>
<div class="t" style="left:528.6px;top:562.27px;font-size:11.5px;line-height:11.5px;color:#111;letter-spacing:0.53px;">Backup di rete completato</div>
<svg class="b" style="left:935.0px;top:559px;" width="16" height="16" viewBox="0 0 16 16"><rect x="1.25" y="3.25" width="11.5" height="11.5" fill="#f4f4f4" stroke="#2a4a64" stroke-width="1.5"/><path d="M2.6,9 L6.6,13.2 L15,3.6" fill="none" stroke="#1c8e1a" stroke-width="4" stroke-linejoin="round" stroke-linecap="round"/><path d="M2.6,9 L6.6,13.2 L15,3.6" fill="none" stroke="url(#cg)" stroke-width="2.6" stroke-linejoin="round" stroke-linecap="round"/></svg>
<svg class="b" style="left:1014.0px;top:559px;" width="16" height="16" viewBox="0 0 16 16"><rect x="1.25" y="3.25" width="11.5" height="11.5" fill="#f4f4f4" stroke="#2a4a64" stroke-width="1.5"/></svg>
<svg class="b" style="left:1093.0px;top:559px;" width="16" height="16" viewBox="0 0 16 16"><rect x="1.25" y="3.25" width="11.5" height="11.5" fill="#f4f4f4" stroke="#2a4a64" stroke-width="1.5"/></svg>
<svg class="b" style="left:1172.0px;top:559px;" width="16" height="16" viewBox="0 0 16 16"><rect x="1.25" y="3.25" width="11.5" height="11.5" fill="#f4f4f4" stroke="#2a4a64" stroke-width="1.5"/></svg>
<svg class="b" style="left:1251.0px;top:559px;" width="16" height="16" viewBox="0 0 16 16"><rect x="1.25" y="3.25" width="11.5" height="11.5" fill="#f4f4f4" stroke="#2a4a64" stroke-width="1.5"/></svg>
<div class="b" style="left:521px;top:580px;width:776px;height:24px;background:#f3f3f3;border-bottom:1px solid #e8e8e8"></div>
<div class="t" style="left:528.6px;top:586.27px;font-size:11.5px;line-height:11.5px;color:#111;letter-spacing:0.53px;">Backup Amazon S3 annullato</div>
<svg class="b" style="left:935.0px;top:583px;" width="16" height="16" viewBox="0 0 16 16"><rect x="1.25" y="3.25" width="11.5" height="11.5" fill="#f4f4f4" stroke="#2a4a64" stroke-width="1.5"/><path d="M2.6,9 L6.6,13.2 L15,3.6" fill="none" stroke="#1c8e1a" stroke-width="4" stroke-linejoin="round" stroke-linecap="round"/><path d="M2.6,9 L6.6,13.2 L15,3.6" fill="none" stroke="url(#cg)" stroke-width="2.6" stroke-linejoin="round" stroke-linecap="round"/></svg>
<svg class="b" style="left:1014.0px;top:583px;" width="16" height="16" viewBox="0 0 16 16"><rect x="1.25" y="3.25" width="11.5" height="11.5" fill="#f4f4f4" stroke="#2a4a64" stroke-width="1.5"/><path d="M2.6,9 L6.6,13.2 L15,3.6" fill="none" stroke="#1c8e1a" stroke-width="4" stroke-linejoin="round" stroke-linecap="round"/><path d="M2.6,9 L6.6,13.2 L15,3.6" fill="none" stroke="url(#cg)" stroke-width="2.6" stroke-linejoin="round" stroke-linecap="round"/></svg>
<svg class="b" style="left:1093.0px;top:583px;" width="16" height="16" viewBox="0 0 16 16"><rect x="1.25" y="3.25" width="11.5" height="11.5" fill="#f4f4f4" stroke="#2a4a64" stroke-width="1.5"/><path d="M2.6,9 L6.6,13.2 L15,3.6" fill="none" stroke="#1c8e1a" stroke-width="4" stroke-linejoin="round" stroke-linecap="round"/><path d="M2.6,9 L6.6,13.2 L15,3.6" fill="none" stroke="url(#cg)" stroke-width="2.6" stroke-linejoin="round" stroke-linecap="round"/></svg>
<svg class="b" style="left:1172.0px;top:583px;" width="16" height="16" viewBox="0 0 16 16"><rect x="1.25" y="3.25" width="11.5" height="11.5" fill="#f4f4f4" stroke="#2a4a64" stroke-width="1.5"/><path d="M2.6,9 L6.6,13.2 L15,3.6" fill="none" stroke="#1c8e1a" stroke-width="4" stroke-linejoin="round" stroke-linecap="round"/><path d="M2.6,9 L6.6,13.2 L15,3.6" fill="none" stroke="url(#cg)" stroke-width="2.6" stroke-linejoin="round" stroke-linecap="round"/></svg>
<svg class="b" style="left:1251.0px;top:583px;" width="16" height="16" viewBox="0 0 16 16"><rect x="1.25" y="3.25" width="11.5" height="11.5" fill="#f4f4f4" stroke="#2a4a64" stroke-width="1.5"/><path d="M2.6,9 L6.6,13.2 L15,3.6" fill="none" stroke="#1c8e1a" stroke-width="4" stroke-linejoin="round" stroke-linecap="round"/><path d="M2.6,9 L6.6,13.2 L15,3.6" fill="none" stroke="url(#cg)" stroke-width="2.6" stroke-linejoin="round" stroke-linecap="round"/></svg>
<div class="b" style="left:521px;top:604px;width:776px;height:24px;background:#fafafa;border-bottom:1px solid #e8e8e8"></div>
<div class="t" style="left:528.6px;top:610.27px;font-size:11.5px;line-height:11.5px;color:#111;letter-spacing:0.53px;">Backup di Amazon S3 non riuscito</div>
<svg class="b" style="left:935.0px;top:607px;" width="16" height="16" viewBox="0 0 16 16"><rect x="1.25" y="3.25" width="11.5" height="11.5" fill="#f4f4f4" stroke="#2a4a64" stroke-width="1.5"/><path d="M2.6,9 L6.6,13.2 L15,3.6" fill="none" stroke="#1c8e1a" stroke-width="4" stroke-linejoin="round" stroke-linecap="round"/><path d="M2.6,9 L6.6,13.2 L15,3.6" fill="none" stroke="url(#cg)" stroke-width="2.6" stroke-linejoin="round" stroke-linecap="round"/></svg>
<svg class="b" style="left:1014.0px;top:607px;" width="16" height="16" viewBox="0 0 16 16"><rect x="1.25" y="3.25" width="11.5" height="11.5" fill="#f4f4f4" stroke="#2a4a64" stroke-width="1.5"/><path d="M2.6,9 L6.6,13.2 L15,3.6" fill="none" stroke="#1c8e1a" stroke-width="4" stroke-linejoin="round" stroke-linecap="round"/><path d="M2.6,9 L6.6,13.2 L15,3.6" fill="none" stroke="url(#cg)" stroke-width="2.6" stroke-linejoin="round" stroke-linecap="round"/></svg>
<svg class="b" style="left:1093.0px;top:607px;" width="16" height="16" viewBox="0 0 16 16"><rect x="1.25" y="3.25" width="11.5" height="11.5" fill="#f4f4f4" stroke="#2a4a64" stroke-width="1.5"/><path d="M2.6,9 L6.6,13.2 L15,3.6" fill="none" stroke="#1c8e1a" stroke-width="4" stroke-linejoin="round" stroke-linecap="round"/><path d="M2.6,9 L6.6,13.2 L15,3.6" fill="none" stroke="url(#cg)" stroke-width="2.6" stroke-linejoin="round" stroke-linecap="round"/></svg>
<svg class="b" style="left:1172.0px;top:607px;" width="16" height="16" viewBox="0 0 16 16"><rect x="1.25" y="3.25" width="11.5" height="11.5" fill="#f4f4f4" stroke="#2a4a64" stroke-width="1.5"/><path d="M2.6,9 L6.6,13.2 L15,3.6" fill="none" stroke="#1c8e1a" stroke-width="4" stroke-linejoin="round" stroke-linecap="round"/><path d="M2.6,9 L6.6,13.2 L15,3.6" fill="none" stroke="url(#cg)" stroke-width="2.6" stroke-linejoin="round" stroke-linecap="round"/></svg>
<svg class="b" style="left:1251.0px;top:607px;" width="16" height="16" viewBox="0 0 16 16"><rect x="1.25" y="3.25" width="11.5" height="11.5" fill="#f4f4f4" stroke="#2a4a64" stroke-width="1.5"/><path d="M2.6,9 L6.6,13.2 L15,3.6" fill="none" stroke="#1c8e1a" stroke-width="4" stroke-linejoin="round" stroke-linecap="round"/><path d="M2.6,9 L6.6,13.2 L15,3.6" fill="none" stroke="url(#cg)" stroke-width="2.6" stroke-linejoin="round" stroke-linecap="round"/></svg>
<div class="b" style="left:521px;top:628px;width:776px;height:24px;background:#f3f3f3;border-bottom:1px solid #e8e8e8"></div>
<div class="t" style="left:528.6px;top:634.27px;font-size:11.5px;line-height:11.5px;color:#111;letter-spacing:0.53px;">Backup Amazon S3 completato</div>
<svg class="b" style="left:935.0px;top:631px;" width="16" height="16" viewBox="0 0 16 16"><rect x="1.25" y="3.25" width="11.5" height="11.5" fill="#f4f4f4" stroke="#2a4a64" stroke-width="1.5"/><path d="M2.6,9 L6.6,13.2 L15,3.6" fill="none" stroke="#1c8e1a" stroke-width="4" stroke-linejoin="round" stroke-linecap="round"/><path d="M2.6,9 L6.6,13.2 L15,3.6" fill="none" stroke="url(#cg)" stroke-width="2.6" stroke-linejoin="round" stroke-linecap="round"/></svg>
<svg class="b" style="left:1014.0px;top:631px;" width="16" height="16" viewBox="0 0 16 16"><rect x="1.25" y="3.25" width="11.5" height="11.5" fill="#f4f4f4" stroke="#2a4a64" stroke-width="1.5"/></svg>
<svg class="b" style="left:1093.0px;top:631px;" width="16" height="16" viewBox="0 0 16 16"><rect x="1.25" y="3.25" width="11.5" height="11.5" fill="#f4f4f4" stroke="#2a4a64" stroke-width="1.5"/></svg>
<svg class="b" style="left:1172.0px;top:631px;" width="16" height="16" viewBox="0 0 16 16"><rect x="1.25" y="3.25" width="11.5" height="11.5" fill="#f4f4f4" stroke="#2a4a64" stroke-width="1.5"/></svg>
<svg class="b" style="left:1251.0px;top:631px;" width="16" height="16" viewBox="0 0 16 16"><rect x="1.25" y="3.25" width="11.5" height="11.5" fill="#f4f4f4" stroke="#2a4a64" stroke-width="1.5"/></svg>
<div class="b" style="left:521px;top:652px;width:776px;height:24px;background:#fafafa;border-bottom:1px solid #e8e8e8"></div>
<div class="t" style="left:528.6px;top:658.27px;font-size:11.5px;line-height:11.5px;color:#111;letter-spacing:0.53px;">Ripristino di rete annullato</div>
<svg class="b" style="left:935.0px;top:655px;" width="16" height="16" viewBox="0 0 16 16"><rect x="1.25" y="3.25" width="11.5" height="11.5" fill="#f4f4f4" stroke="#2a4a64" stroke-width="1.5"/><path d="M2.6,9 L6.6,13.2 L15,3.6" fill="none" stroke="#1c8e1a" stroke-width="4" stroke-linejoin="round" stroke-linecap="round"/><path d="M2.6,9 L6.6,13.2 L15,3.6" fill="none" stroke="url(#cg)" stroke-width="2.6" stroke-linejoin="round" stroke-linecap="round"/></svg>
<svg class="b" style="left:1014.0px;top:655px;" width="16" height="16" viewBox="0 0 16 16"><rect x="1.25" y="3.25" width="11.5" height="11.5" fill="#f4f4f4" stroke="#2a4a64" stroke-width="1.5"/><path d="M2.6,9 L6.6,13.2 L15,3.6" fill="none" stroke="#1c8e1a" stroke-width="4" stroke-linejoin="round" stroke-linecap="round"/><path d="M2.6,9 L6.6,13.2 L15,3.6" fill="none" stroke="url(#cg)" stroke-width="2.6" stroke-linejoin="round" stroke-linecap="round"/></svg>
<svg class="b" style="left:1093.0px;top:655px;" width="16" height="16" viewBox="0 0 16 16"><rect x="1.25" y="3.25" width="11.5" height="11.5" fill="#f4f4f4" stroke="#2a4a64" stroke-width="1.5"/><path d="M2.6,9 L6.6,13.2 L15,3.6" fill="none" stroke="#1c8e1a" stroke-width="4" stroke-linejoin="round" stroke-linecap="round"/><path d="M2.6,9 L6.6,13.2 L15,3.6" fill="none" stroke="url(#cg)" stroke-width="2.6" stroke-linejoin="round" stroke-linecap="round"/></svg>
<svg class="b" style="left:1172.0px;top:655px;" width="16" height="16" viewBox="0 0 16 16"><rect x="1.25" y="3.25" width="11.5" height="11.5" fill="#f4f4f4" stroke="#2a4a64" stroke-width="1.5"/><path d="M2.6,9 L6.6,13.2 L15,3.6" fill="none" stroke="#1c8e1a" stroke-width="4" stroke-linejoin="round" stroke-linecap="round"/><path d="M2.6,9 L6.6,13.2 L15,3.6" fill="none" stroke="url(#cg)" stroke-width="2.6" stroke-linejoin="round" stroke-linecap="round"/></svg>
<svg class="b" style="left:1251.0px;top:655px;" width="16" height="16" viewBox="0 0 16 16"><rect x="1.25" y="3.25" width="11.5" height="11.5" fill="#f4f4f4" stroke="#2a4a64" stroke-width="1.5"/><path d="M2.6,9 L6.6,13.2 L15,3.6" fill="none" stroke="#1c8e1a" stroke-width="4" stroke-linejoin="round" stroke-linecap="round"/><path d="M2.6,9 L6.6,13.2 L15,3.6" fill="none" stroke="url(#cg)" stroke-width="2.6" stroke-linejoin="round" stroke-linecap="round"/></svg>
<div class="b" style="left:521px;top:676px;width:776px;height:24px;background:#f3f3f3;border-bottom:1px solid #e8e8e8"></div>
<div class="t" style="left:528.6px;top:682.27px;font-size:11.5px;line-height:11.5px;color:#111;letter-spacing:0.53px;">Ripristino di rete non riuscito</div>
<svg class="b" style="left:935.0px;top:679px;" width="16" height="16" viewBox="0 0 16 16"><rect x="1.25" y="3.25" width="11.5" height="11.5" fill="#f4f4f4" stroke="#2a4a64" stroke-width="1.5"/><path d="M2.6,9 L6.6,13.2 L15,3.6" fill="none" stroke="#1c8e1a" stroke-width="4" stroke-linejoin="round" stroke-linecap="round"/><path d="M2.6,9 L6.6,13.2 L15,3.6" fill="none" stroke="url(#cg)" stroke-width="2.6" stroke-linejoin="round" stroke-linecap="round"/></svg>
<svg class="b" style="left:1014.0px;top:679px;" width="16" height="16" viewBox="0 0 16 16"><rect x="1.25" y="3.25" width="11.5" height="11.5" fill="#f4f4f4" stroke="#2a4a64" stroke-width="1.5"/><path d="M2.6,9 L6.6,13.2 L15,3.6" fill="none" stroke="#1c8e1a" stroke-width="4" stroke-linejoin="round" stroke-linecap="round"/><path d="M2.6,9 L6.6,13.2 L15,3.6" fill="none" stroke="url(#cg)" stroke-width="2.6" stroke-linejoin="round" stroke-linecap="round"/></svg>
<svg class="b" style="left:1093.0px;top:679px;" width="16" height="16" viewBox="0 0 16 16"><rect x="1.25" y="3.25" width="11.5" height="11.5" fill="#f4f4f4" stroke="#2a4a64" stroke-width="1.5"/><path d="M2.6,9 L6.6,13.2 L15,3.6" fill="none" stroke="#1c8e1a" stroke-width="4" stroke-linejoin="round" stroke-linecap="round"/><path d="M2.6,9 L6.6,13.2 L15,3.6" fill="none" stroke="url(#cg)" stroke-width="2.6" stroke-linejoin="round" stroke-linecap="round"/></svg>
<svg class="b" style="left:1172.0px;top:679px;" width="16" height="16" viewBox="0 0 16 16"><rect x="1.25" y="3.25" width="11.5" height="11.5" fill="#f4f4f4" stroke="#2a4a64" stroke-width="1.5"/><path d="M2.6,9 L6.6,13.2 L15,3.6" fill="none" stroke="#1c8e1a" stroke-width="4" stroke-linejoin="round" stroke-linecap="round"/><path d="M2.6,9 L6.6,13.2 L15,3.6" fill="none" stroke="url(#cg)" stroke-width="2.6" stroke-linejoin="round" stroke-linecap="round"/></svg>
<svg class="b" style="left:1251.0px;top:679px;" width="16" height="16" viewBox="0 0 16 16"><rect x="1.25" y="3.25" width="11.5" height="11.5" fill="#f4f4f4" stroke="#2a4a64" stroke-width="1.5"/><path d="M2.6,9 L6.6,13.2 L15,3.6" fill="none" stroke="#1c8e1a" stroke-width="4" stroke-linejoin="round" stroke-linecap="round"/><path d="M2.6,9 L6.6,13.2 L15,3.6" fill="none" stroke="url(#cg)" stroke-width="2.6" stroke-linejoin="round" stroke-linecap="round"/></svg>
<div class="b" style="left:521px;top:700px;width:776px;height:24px;background:#fafafa;border-bottom:1px solid #e8e8e8"></div>
<div class="t" style="left:528.6px;top:706.27px;font-size:11.5px;line-height:11.5px;color:#111;letter-spacing:0.53px;">Ripristino di rete completato</div>
<svg class="b" style="left:935.0px;top:703px;" width="16" height="16" viewBox="0 0 16 16"><rect x="1.25" y="3.25" width="11.5" height="11.5" fill="#f4f4f4" stroke="#2a4a64" stroke-width="1.5"/><path d="M2.6,9 L6.6,13.2 L15,3.6" fill="none" stroke="#1c8e1a" stroke-width="4" stroke-linejoin="round" stroke-linecap="round"/><path d="M2.6,9 L6.6,13.2 L15,3.6" fill="none" stroke="url(#cg)" stroke-width="2.6" stroke-linejoin="round" stroke-linecap="round"/></svg>
<svg class="b" style="left:1014.0px;top:703px;" width="16" height="16" viewBox="0 0 16 16"><rect x="1.25" y="3.25" width="11.5" height="11.5" fill="#f4f4f4" stroke="#2a4a64" stroke-width="1.5"/><path d="M2.6,9 L6.6,13.2 L15,3.6" fill="none" stroke="#1c8e1a" stroke-width="4" stroke-linejoin="round" stroke-linecap="round"/><path d="M2.6,9 L6.6,13.2 L15,3.6" fill="none" stroke="url(#cg)" stroke-width="2.6" stroke-linejoin="round" stroke-linecap="round"/></svg>
<svg class="b" style="left:1093.0px;top:703px;" width="16" height="16" viewBox="0 0 16 16"><rect x="1.25" y="3.25" width="11.5" height="11.5" fill="#f4f4f4" stroke="#2a4a64" stroke-width="1.5"/><path d="M2.6,9 L6.6,13.2 L15,3.6" fill="none" stroke="#1c8e1a" stroke-width="4" stroke-linejoin="round" stroke-linecap="round"/><path d="M2.6,9 L6.6,13.2 L15,3.6" fill="none" stroke="url(#cg)" stroke-width="2.6" stroke-linejoin="round" stroke-linecap="round"/></svg>
<svg class="b" style="left:1172.0px;top:703px;" width="16" height="16" viewBox="0 0 16 16"><rect x="1.25" y="3.25" width="11.5" height="11.5" fill="#f4f4f4" stroke="#2a4a64" stroke-width="1.5"/><path d="M2.6,9 L6.6,13.2 L15,3.6" fill="none" stroke="#1c8e1a" stroke-width="4" stroke-linejoin="round" stroke-linecap="round"/><path d="M2.6,9 L6.6,13.2 L15,3.6" fill="none" stroke="url(#cg)" stroke-width="2.6" stroke-linejoin="round" stroke-linecap="round"/></svg>
<svg class="b" style="left:1251.0px;top:703px;" width="16" height="16" viewBox="0 0 16 16"><rect x="1.25" y="3.25" width="11.5" height="11.5" fill="#f4f4f4" stroke="#2a4a64" stroke-width="1.5"/><path d="M2.6,9 L6.6,13.2 L15,3.6" fill="none" stroke="#1c8e1a" stroke-width="4" stroke-linejoin="round" stroke-linecap="round"/><path d="M2.6,9 L6.6,13.2 L15,3.6" fill="none" stroke="url(#cg)" stroke-width="2.6" stroke-linejoin="round" stroke-linecap="round"/></svg>
<div class="b" style="left:521px;top:724px;width:776px;height:24px;background:#f3f3f3;border-bottom:1px solid #e8e8e8"></div>
<div class="t" style="left:528.6px;top:730.27px;font-size:11.5px;line-height:11.5px;color:#111;letter-spacing:0.53px;">Ripristino Amazon S3 annullato</div>
<svg class="b" style="left:935.0px;top:727px;" width="16" height="16" viewBox="0 0 16 16"><rect x="1.25" y="3.25" width="11.5" height="11.5" fill="#f4f4f4" stroke="#2a4a64" stroke-width="1.5"/><path d="M2.6,9 L6.6,13.2 L15,3.6" fill="none" stroke="#1c8e1a" stroke-width="4" stroke-linejoin="round" stroke-linecap="round"/><path d="M2.6,9 L6.6,13.2 L15,3.6" fill="none" stroke="url(#cg)" stroke-width="2.6" stroke-linejoin="round" stroke-linecap="round"/></svg>
<svg class="b" style="left:1014.0px;top:727px;" width="16" height="16" viewBox="0 0 16 16"><rect x="1.25" y="3.25" width="11.5" height="11.5" fill="#f4f4f4" stroke="#2a4a64" stroke-width="1.5"/><path d="M2.6,9 L6.6,13.2 L15,3.6" fill="none" stroke="#1c8e1a" stroke-width="4" stroke-linejoin="round" stroke-linecap="round"/><path d="M2.6,9 L6.6,13.2 L15,3.6" fill="none" stroke="url(#cg)" stroke-width="2.6" stroke-linejoin="round" stroke-linecap="round"/></svg>
<svg class="b" style="left:1093.0px;top:727px;" width="16" height="16" viewBox="0 0 16 16"><rect x="1.25" y="3.25" width="11.5" height="11.5" fill="#f4f4f4" stroke="#2a4a64" stroke-width="1.5"/><path d="M2.6,9 L6.6,13.2 L15,3.6" fill="none" stroke="#1c8e1a" stroke-width="4" stroke-linejoin="round" stroke-linecap="round"/><path d="M2.6,9 L6.6,13.2 L15,3.6" fill="none" stroke="url(#cg)" stroke-width="2.6" stroke-linejoin="round" stroke-linecap="round"/></svg>
<svg class="b" style="left:1172.0px;top:727px;" width="16" height="16" viewBox="0 0 16 16"><rect x="1.25" y="3.25" width="11.5" height="11.5" fill="#f4f4f4" stroke="#2a4a64" stroke-width="1.5"/><path d="M2.6,9 L6.6,13.2 L15,3.6" fill="none" stroke="#1c8e1a" stroke-width="4" stroke-linejoin="round" stroke-linecap="round"/><path d="M2.6,9 L6.6,13.2 L15,3.6" fill="none" stroke="url(#cg)" stroke-width="2.6" stroke-linejoin="round" stroke-linecap="round"/></svg>
<svg class="b" style="left:1251.0px;top:727px;" width="16" height="16" viewBox="0 0 16 16"><rect x="1.25" y="3.25" width="11.5" height="11.5" fill="#f4f4f4" stroke="#2a4a64" stroke-width="1.5"/><path d="M2.6,9 L6.6,13.2 L15,3.6" fill="none" stroke="#1c8e1a" stroke-width="4" stroke-linejoin="round" stroke-linecap="round"/><path d="M2.6,9 L6.6,13.2 L15,3.6" fill="none" stroke="url(#cg)" stroke-width="2.6" stroke-linejoin="round" stroke-linecap="round"/></svg>
<div class="b" style="left:521px;top:748px;width:776px;height:24px;background:#fafafa;border-bottom:1px solid #e8e8e8"></div>
<div class="t" style="left:528.6px;top:754.27px;font-size:11.5px;line-height:11.5px;color:#111;letter-spacing:0.53px;">Ripristino Amazon S3 non riuscito</div>
<svg class="b" style="left:935.0px;top:751px;" width="16" height="16" viewBox="0 0 16 16"><rect x="1.25" y="3.25" width="11.5" height="11.5" fill="#f4f4f4" stroke="#2a4a64" stroke-width="1.5"/><path d="M2.6,9 L6.6,13.2 L15,3.6" fill="none" stroke="#1c8e1a" stroke-width="4" stroke-linejoin="round" stroke-linecap="round"/><path d="M2.6,9 L6.6,13.2 L15,3.6" fill="none" stroke="url(#cg)" stroke-width="2.6" stroke-linejoin="round" stroke-linecap="round"/></svg>
<svg class="b" style="left:1014.0px;top:751px;" width="16" height="16" viewBox="0 0 16 16"><rect x="1.25" y="3.25" width="11.5" height="11.5" fill="#f4f4f4" stroke="#2a4a64" stroke-width="1.5"/><path d="M2.6,9 L6.6,13.2 L15,3.6" fill="none" stroke="#1c8e1a" stroke-width="4" stroke-linejoin="round" stroke-linecap="round"/><path d="M2.6,9 L6.6,13.2 L15,3.6" fill="none" stroke="url(#cg)" stroke-width="2.6" stroke-linejoin="round" stroke-linecap="round"/></svg>
<svg class="b" style="left:1093.0px;top:751px;" width="16" height="16" viewBox="0 0 16 16"><rect x="1.25" y="3.25" width="11.5" height="11.5" fill="#f4f4f4" stroke="#2a4a64" stroke-width="1.5"/><path d="M2.6,9 L6.6,13.2 L15,3.6" fill="none" stroke="#1c8e1a" stroke-width="4" stroke-linejoin="round" stroke-linecap="round"/><path d="M2.6,9 L6.6,13.2 L15,3.6" fill="none" stroke="url(#cg)" stroke-width="2.6" stroke-linejoin="round" stroke-linecap="round"/></svg>
<svg class="b" style="left:1172.0px;top:751px;" width="16" height="16" viewBox="0 0 16 16"><rect x="1.25" y="3.25" width="11.5" height="11.5" fill="#f4f4f4" stroke="#2a4a64" stroke-width="1.5"/><path d="M2.6,9 L6.6,13.2 L15,3.6" fill="none" stroke="#1c8e1a" stroke-width="4" stroke-linejoin="round" stroke-linecap="round"/><path d="M2.6,9 L6.6,13.2 L15,3.6" fill="none" stroke="url(#cg)" stroke-width="2.6" stroke-linejoin="round" stroke-linecap="round"/></svg>
<svg class="b" style="left:1251.0px;top:751px;" width="16" height="16" viewBox="0 0 16 16"><rect x="1.25" y="3.25" width="11.5" height="11.5" fill="#f4f4f4" stroke="#2a4a64" stroke-width="1.5"/><path d="M2.6,9 L6.6,13.2 L15,3.6" fill="none" stroke="#1c8e1a" stroke-width="4" stroke-linejoin="round" stroke-linecap="round"/><path d="M2.6,9 L6.6,13.2 L15,3.6" fill="none" stroke="url(#cg)" stroke-width="2.6" stroke-linejoin="round" stroke-linecap="round"/></svg>
<div class="b" style="left:521px;top:772px;width:776px;height:24px;background:#f3f3f3;border-bottom:1px solid #e8e8e8"></div>
<div class="t" style="left:528.6px;top:778.27px;font-size:11.5px;line-height:11.5px;color:#111;letter-spacing:0.53px;">Ripristino Amazon S3 completato</div>
<svg class="b" style="left:935.0px;top:775px;" width="16" height="16" viewBox="0 0 16 16"><rect x="1.25" y="3.25" width="11.5" height="11.5" fill="#f4f4f4" stroke="#2a4a64" stroke-width="1.5"/><path d="M2.6,9 L6.6,13.2 L15,3.6" fill="none" stroke="#1c8e1a" stroke-width="4" stroke-linejoin="round" stroke-linecap="round"/><path d="M2.6,9 L6.6,13.2 L15,3.6" fill="none" stroke="url(#cg)" stroke-width="2.6" stroke-linejoin="round" stroke-linecap="round"/></svg>
<svg class="b" style="left:1014.0px;top:775px;" width="16" height="16" viewBox="0 0 16 16"><rect x="1.25" y="3.25" width="11.5" height="11.5" fill="#f4f4f4" stroke="#2a4a64" stroke-width="1.5"/><path d="M2.6,9 L6.6,13.2 L15,3.6" fill="none" stroke="#1c8e1a" stroke-width="4" stroke-linejoin="round" stroke-linecap="round"/><path d="M2.6,9 L6.6,13.2 L15,3.6" fill="none" stroke="url(#cg)" stroke-width="2.6" stroke-linejoin="round" stroke-linecap="round"/></svg>
<svg class="b" style="left:1093.0px;top:775px;" width="16" height="16" viewBox="0 0 16 16"><rect x="1.25" y="3.25" width="11.5" height="11.5" fill="#f4f4f4" stroke="#2a4a64" stroke-width="1.5"/><path d="M2.6,9 L6.6,13.2 L15,3.6" fill="none" stroke="#1c8e1a" stroke-width="4" stroke-linejoin="round" stroke-linecap="round"/><path d="M2.6,9 L6.6,13.2 L15,3.6" fill="none" stroke="url(#cg)" stroke-width="2.6" stroke-linejoin="round" stroke-linecap="round"/></svg>
<svg class="b" style="left:1172.0px;top:775px;" width="16" height="16" viewBox="0 0 16 16"><rect x="1.25" y="3.25" width="11.5" height="11.5" fill="#f4f4f4" stroke="#2a4a64" stroke-width="1.5"/><path d="M2.6,9 L6.6,13.2 L15,3.6" fill="none" stroke="#1c8e1a" stroke-width="4" stroke-linejoin="round" stroke-linecap="round"/><path d="M2.6,9 L6.6,13.2 L15,3.6" fill="none" stroke="url(#cg)" stroke-width="2.6" stroke-linejoin="round" stroke-linecap="round"/></svg>
<svg class="b" style="left:1251.0px;top:775px;" width="16" height="16" viewBox="0 0 16 16"><rect x="1.25" y="3.25" width="11.5" height="11.5" fill="#f4f4f4" stroke="#2a4a64" stroke-width="1.5"/><path d="M2.6,9 L6.6,13.2 L15,3.6" fill="none" stroke="#1c8e1a" stroke-width="4" stroke-linejoin="round" stroke-linecap="round"/><path d="M2.6,9 L6.6,13.2 L15,3.6" fill="none" stroke="url(#cg)" stroke-width="2.6" stroke-linejoin="round" stroke-linecap="round"/></svg>
<div class="b" style="left:1297px;top:437px;width:20px;height:360px;background:#f0f0f0;border-left:1px solid #e2e2e2"></div>
<svg class="b" style="left:1300px;top:440px;" width="16" height="12" viewBox="0 0 16 12"><path d="M4,8 L8,4 L12,8 Z" fill="#777"/></svg>
<div class="b" style="left:1301px;top:455px;width:15px;height:68px;background:linear-gradient(90deg,#e8e8e8,#fdfdfd 40%,#d0d0d0);border:1px solid #a0a0a0;border-radius:2px"></div>
<svg class="b" style="left:1303px;top:482px;" width="12" height="12" viewBox="0 0 12 12"><path d="M3,3 L9,2 M3,6 L9,5 M3,9 L9,8" stroke="#555" stroke-width="1"/></svg>
<div class="b" style="left:1301px;top:780px;width:15px;height:16px;background:linear-gradient(180deg,#fdfdfd,#dedede);border:1px solid #a0a0a0;border-radius:2px"></div>
<svg class="b" style="left:1301px;top:780px;" width="15" height="16" viewBox="0 0 15 16"><path d="M4.5,6.5 L10.5,6.5 L7.5,9.5 Z" fill="#555"/></svg>
<div class="t" style="left:528px;top:808.27px;font-size:11.5px;line-height:11.5px;color:#111;letter-spacing:0.58px;">È possibile cambiare l’impostazione della lingua di notifica in <span style="color:#1c2aa8">Opzioni regionali</span>.</div>
<div class="b" style="left:1579px;top:201px;width:341px;height:758px;background:linear-gradient(180deg,#ebeff5 0,#e2e8f1 300px,#e0e6ef 758px);border-left:1px solid #0a2e66;border-top:1px solid #0a2e66"></div>
<div class="b" style="left:1580px;top:202px;width:340px;height:757px;background:linear-gradient(160deg,rgba(255,255,255,.5),rgba(255,255,255,0) 40%,rgba(255,255,255,.25) 60%,rgba(255,255,255,0) 80%)"></div>
<svg class="b" style="left:1597px;top:217px;" width="28" height="31" viewBox="0 0 28 31"><defs><linearGradient id="sh" x1="0" y1="0" x2="1" y2="1"><stop offset="0" stop-color="#8a8a8a"/><stop offset=".5" stop-color="#4a4a4a"/><stop offset="1" stop-color="#1a1a1a"/></linearGradient></defs><path d="M14,2 Q21,2 25.5,5 Q27,17 22,24 Q18,28.6 14,29 Q10,28.6 6,24 Q1,17 2.5,5 Q7,2 14,2 Z" fill="url(#sh)" stroke="#f4f4f4" stroke-width="1"/><path d="M5,7 Q14,2 23,7" fill="none" stroke="#eee" stroke-width="1.4"/><path d="M11.5,10 L16.5,10 L16.5,13.5 L20,13.5 L20,18 L16.5,18 L16.5,22 L11.5,22 L11.5,18 L8,18 L8,13.5 L11.5,13.5 Z" fill="#fff"/></svg>
<div class="t" style="left:1639.3px;top:226.22px;font-size:12.5px;line-height:12.5px;color:#12427e;font-weight:bold;letter-spacing:0.7px;">Stato del sistema</div>
<div class="b" style="left:1592px;top:253px;width:317px;height:137px;background:linear-gradient(180deg,#f4f5f8 0%,#eaecf2 35%,#c4c8da 100%);border:1px solid #4e586a;border-radius:5px"></div>
<svg class="b" style="left:1609px;top:284px;" width="74" height="74" viewBox="0 0 74 74"><defs><radialGradient id="gc" cx=".5" cy=".35" r=".65"><stop offset="0" stop-color="#7ee07a"/><stop offset=".6" stop-color="#2cb42c"/><stop offset="1" stop-color="#0e8a14"/></radialGradient><radialGradient id="gglow" cx=".5" cy=".5" r=".5"><stop offset=".7" stop-color="#7ae07a" stop-opacity=".6"/><stop offset="1" stop-color="#7ae07a" stop-opacity="0"/></radialGradient></defs><circle cx="37" cy="37.5" r="36" fill="url(#gglow)"/><circle cx="37" cy="37.5" r="28.5" fill="url(#gc)"/><ellipse cx="37" cy="27" rx="19" ry="12" fill="#fff" opacity=".18"/><path d="M21,38.5 L32.5,50 L53,30.5" fill="none" stroke="#fff" stroke-width="5.8" stroke-linecap="butt"/></svg>
<div class="t" style="left:1702.5px;top:280.89px;font-size:17.5px;line-height:17.5px;color:#2a9a2a;letter-spacing:0.85px;">Buono</div>
<div class="t" style="left:1702px;top:303.82px;font-size:12.5px;line-height:12.5px;color:#4a4a4a;letter-spacing:0.7px;">DiskStation funziona</div>
<div class="t" style="left:1702px;top:317.92px;font-size:12.5px;line-height:12.5px;color:#4a4a4a;letter-spacing:0.7px;">correttamente.</div>
<div class="t" style="left:1702px;top:366.92px;font-size:12.5px;line-height:12.5px;color:#1a1a1a;letter-spacing:0.97px;">Tempo di attività: 00:35:00</div>
<svg class="b" style="left:1597px;top:400px;" width="30" height="24" viewBox="0 0 30 24"><defs><linearGradient id="bar" x1="0" y1="0" x2="0" y2="1"><stop offset="0" stop-color="#aaa"/><stop offset="1" stop-color="#111"/></linearGradient></defs><path d="M2.5,2 L2.5,21.5 L28,21.5" fill="none" stroke="#222" stroke-width="1.5"/><rect x="5" y="4" width="5.5" height="17" rx="1.5" fill="url(#bar)"/><rect x="12.5" y="13" width="5" height="8" rx="1.5" fill="url(#bar)"/><rect x="19.5" y="10" width="5" height="11" rx="1.5" fill="url(#bar)"/></svg>
<div class="t" style="left:1639.3px;top:406.12px;font-size:12.5px;line-height:12.5px;color:#12427e;font-weight:bold;letter-spacing:0.7px;">Controllo risorse</div>
<div class="b" style="left:1592px;top:433px;width:317px;height:137px;background:linear-gradient(180deg,#f4f5f8 0%,#eaecf2 35%,#c4c8da 100%);border:1px solid #4e586a;border-radius:5px"></div>
<svg class="b" style="left:1614px;top:446px;" width="25" height="91" viewBox="0 0 25 91"><rect x="0" y="0" width="25" height="91" fill="#0e1c2c"/><rect x="1.5" y="1.5" width="22" height="88" fill="#1b3a5a"/><rect x="1.5" y="10.3" width="22" height="1.3" fill="#7890a8" opacity=".65"/><rect x="1.5" y="19.1" width="22" height="1.3" fill="#7890a8" opacity=".65"/><rect x="1.5" y="27.9" width="22" height="1.3" fill="#7890a8" opacity=".65"/><rect x="1.5" y="36.7" width="22" height="1.3" fill="#7890a8" opacity=".65"/><rect x="1.5" y="45.5" width="22" height="1.3" fill="#7890a8" opacity=".65"/><rect x="1.5" y="54.3" width="22" height="1.3" fill="#7890a8" opacity=".65"/><rect x="1.5" y="63.1" width="22" height="1.3" fill="#7890a8" opacity=".65"/><rect x="1.5" y="71.9" width="22" height="1.3" fill="#7890a8" opacity=".65"/><rect x="1.5" y="80.7" width="22" height="1.3" fill="#7890a8" opacity=".65"/><path d="M1.5,60 L23.5,20 L23.5,1.5 L1.5,1.5 Z" fill="#fff" opacity=".08"/><rect x="2.5" y="81" width="20" height="7.5" fill="#3aa0ec"/></svg>
<svg class="b" style="left:1655px;top:446px;" width="25" height="91" viewBox="0 0 25 91"><rect x="0" y="0" width="25" height="91" fill="#0e1c2c"/><rect x="1.5" y="1.5" width="22" height="88" fill="#1b3a5a"/><rect x="1.5" y="10.3" width="22" height="1.3" fill="#7890a8" opacity=".65"/><rect x="1.5" y="19.1" width="22" height="1.3" fill="#7890a8" opacity=".65"/><rect x="1.5" y="27.9" width="22" height="1.3" fill="#7890a8" opacity=".65"/><rect x="1.5" y="36.7" width="22" height="1.3" fill="#7890a8" opacity=".65"/><rect x="1.5" y="45.5" width="22" height="1.3" fill="#7890a8" opacity=".65"/><rect x="1.5" y="54.3" width="22" height="1.3" fill="#7890a8" opacity=".65"/><rect x="1.5" y="63.1" width="22" height="1.3" fill="#7890a8" opacity=".65"/><rect x="1.5" y="71.9" width="22" height="1.3" fill="#7890a8" opacity=".65"/><rect x="1.5" y="80.7" width="22" height="1.3" fill="#7890a8" opacity=".65"/><path d="M1.5,60 L23.5,20 L23.5,1.5 L1.5,1.5 Z" fill="#fff" opacity=".08"/><rect x="2.5" y="81" width="20" height="7.5" fill="#3aa0ec"/></svg>
<div class="t" style="left:1627px;transform:translateX(-50%);top:545.82px;font-size:12.5px;line-height:12.5px;color:#222;letter-spacing:0.2px;">CPU</div>
<div class="t" style="left:1668px;transform:translateX(-50%);top:545.82px;font-size:12.5px;line-height:12.5px;color:#222;letter-spacing:0.2px;">RAM</div>
<svg class="b" style="left:1731px;top:447px;" width="147" height="93" viewBox="0 0 147 93"><defs><linearGradient id="chg" x1="0" y1="0" x2="1" y2="1"><stop offset="0" stop-color="#4a6a88"/><stop offset=".35" stop-color="#2a4a68"/><stop offset=".36" stop-color="#143252"/><stop offset="1" stop-color="#0c2a48"/></linearGradient></defs><rect x="0.5" y="0.5" width="146" height="92" fill="url(#chg)" stroke="#5a5a5a" stroke-width="1.5"/><path d="M2,89 L30,89 L45,88.5 L60,88.5 L68,87.5 L75,88.5 L82,88.5 L88,86 L96,89 L125,89 L135,87.5 L140,89 L145,89 L145,91 L2,91 Z" fill="#2aa8f0"/><path d="M45,89.5 L60,89 L68,88 L75,89 L82,89 L88,87.5 L96,89.5 L110,89.5 L125,90 L60,90.5 Z" fill="#30d040" opacity=".85"/></svg>
<div class="t" style="right:189.5px;top:446.39px;font-size:11px;line-height:11px;color:#5a5a5a;letter-spacing:0.6px;">100</div>
<div class="t" style="right:189.5px;top:463.49px;font-size:11px;line-height:11px;color:#5a5a5a;letter-spacing:0.6px;">80</div>
<div class="t" style="right:189.5px;top:481.59px;font-size:11px;line-height:11px;color:#5a5a5a;letter-spacing:0.6px;">60</div>
<div class="t" style="right:189.5px;top:498.59px;font-size:11px;line-height:11px;color:#5a5a5a;letter-spacing:0.6px;">40</div>
<div class="t" style="right:189.5px;top:516.69px;font-size:11px;line-height:11px;color:#5a5a5a;letter-spacing:0.6px;">20</div>
<div class="t" style="right:189.5px;top:534.29px;font-size:11px;line-height:11px;color:#5a5a5a;letter-spacing:0.6px;">0</div>
<svg class="b" style="left:1882px;top:484px;" width="14" height="18" viewBox="0 0 14 18"><path d="M4,3 L10,9 L4,15" fill="none" stroke="#333" stroke-width="2.6"/></svg>
<svg class="b" style="left:1726px;top:544px;" width="12" height="14" viewBox="0 0 12 14"><path d="M6,1 L11,6.5 L8,6.5 L8,12.5 L4,12.5 L4,6.5 L1,6.5 Z" fill="#38a0f0" stroke="#1a70c0" stroke-width=".6"/></svg>
<div class="t" style="left:1740.5px;top:546.24px;font-size:12px;line-height:12px;color:#222;letter-spacing:0.45px;">0 KB/s</div>
<svg class="b" style="left:1779px;top:544px;" width="12" height="14" viewBox="0 0 12 14"><path d="M6,13 L11,7.5 L8,7.5 L8,1.5 L4,1.5 L4,7.5 L1,7.5 Z" fill="#40d040" stroke="#1a9a20" stroke-width=".6"/></svg>
<div class="t" style="left:1792px;top:546.24px;font-size:12px;line-height:12px;color:#222;letter-spacing:0.45px;">0 KB/s</div>
<svg class="b" style="left:1598px;top:577px;" width="28" height="31" viewBox="0 0 28 31"><path d="M2,2 L18,2 L25,9 L25,27 L2,27 Z" fill="#fff" stroke="#111" stroke-width="2.8" stroke-linejoin="round"/><path d="M18,2 L18,9 L25,9" fill="none" stroke="#111" stroke-width="2.2"/><rect x="6" y="8" width="7" height="2.2" fill="#111"/><rect x="6" y="13" width="7" height="2.2" fill="#111"/><rect x="6" y="18" width="15" height="2.2" fill="#111"/><rect x="6" y="22.5" width="15" height="2.2" fill="#111"/></svg>
<div class="t" style="left:1639.3px;top:586.12px;font-size:12.5px;line-height:12.5px;color:#12427e;font-weight:bold;letter-spacing:0.7px;">Registri recenti</div>
<div class="b" style="left:1592px;top:613px;width:317px;height:137px;background:linear-gradient(180deg,#f4f5f8 0%,#eaecf2 35%,#c4c8da 100%);border:1px solid #4e586a;border-radius:5px"></div>
<div class="b" style="left:1647px;top:620px;width:253px;height:24px;background:#eef0f5"></div>
<svg class="b" style="left:1653px;top:625px;" width="15" height="15" viewBox="0 0 15 15"><defs><radialGradient id="ib" cx=".4" cy=".3" r=".7"><stop offset="0" stop-color="#9ad0ff"/><stop offset="1" stop-color="#1a62c0"/></radialGradient></defs><circle cx="7.5" cy="7.5" r="6.8" fill="url(#ib)" stroke="#2a5aa0" stroke-width=".5"/><circle cx="7.5" cy="4.2" r="1.3" fill="#fff"/><rect x="6.4" y="6.2" width="2.2" height="5.8" fill="#fff"/></svg>
<div class="t" style="left:1682.5px;top:626.84px;font-size:12px;line-height:12px;color:#222;letter-spacing:0.38px;">SSH service was started.</div>
<div class="b" style="left:1647px;top:644px;width:253px;height:24px;background:#dcdfe7"></div>
<svg class="b" style="left:1653px;top:649px;" width="15" height="15" viewBox="0 0 15 15"><defs><radialGradient id="ib" cx=".4" cy=".3" r=".7"><stop offset="0" stop-color="#9ad0ff"/><stop offset="1" stop-color="#1a62c0"/></radialGradient></defs><circle cx="7.5" cy="7.5" r="6.8" fill="url(#ib)" stroke="#2a5aa0" stroke-width=".5"/><circle cx="7.5" cy="4.2" r="1.3" fill="#fff"/><rect x="6.4" y="6.2" width="2.2" height="5.8" fill="#fff"/></svg>
<div class="t" style="left:1682.5px;top:650.84px;font-size:12px;line-height:12px;color:#222;letter-spacing:0.38px;">Telnet service was started.</div>
<div class="b" style="left:1647px;top:668px;width:253px;height:24px;background:#eef0f5"></div>
<svg class="b" style="left:1653px;top:673px;" width="15" height="15" viewBox="0 0 15 15"><defs><radialGradient id="ib" cx=".4" cy=".3" r=".7"><stop offset="0" stop-color="#9ad0ff"/><stop offset="1" stop-color="#1a62c0"/></radialGradient></defs><circle cx="7.5" cy="7.5" r="6.8" fill="url(#ib)" stroke="#2a5aa0" stroke-width=".5"/><circle cx="7.5" cy="4.2" r="1.3" fill="#fff"/><rect x="6.4" y="6.2" width="2.2" height="5.8" fill="#fff"/></svg>
<div class="t" style="left:1682.5px;top:674.84px;font-size:12px;line-height:12px;color:#222;letter-spacing:0.38px;">System successfully started Mysql...</div>
<div class="b" style="left:1647px;top:692px;width:253px;height:24px;background:#dcdfe7"></div>
<svg class="b" style="left:1653px;top:697px;" width="15" height="15" viewBox="0 0 15 15"><defs><radialGradient id="ib" cx=".4" cy=".3" r=".7"><stop offset="0" stop-color="#9ad0ff"/><stop offset="1" stop-color="#1a62c0"/></radialGradient></defs><circle cx="7.5" cy="7.5" r="6.8" fill="url(#ib)" stroke="#2a5aa0" stroke-width=".5"/><circle cx="7.5" cy="4.2" r="1.3" fill="#fff"/><rect x="6.4" y="6.2" width="2.2" height="5.8" fill="#fff"/></svg>
<div class="t" style="left:1682.5px;top:698.84px;font-size:12px;line-height:12px;color:#222;letter-spacing:0.38px;">System successfully started Web S...</div>
<div class="b" style="left:1647px;top:716px;width:253px;height:24px;background:#eef0f5"></div>
<svg class="b" style="left:1653px;top:721px;" width="15" height="15" viewBox="0 0 15 15"><defs><radialGradient id="ib" cx=".4" cy=".3" r=".7"><stop offset="0" stop-color="#9ad0ff"/><stop offset="1" stop-color="#1a62c0"/></radialGradient></defs><circle cx="7.5" cy="7.5" r="6.8" fill="url(#ib)" stroke="#2a5aa0" stroke-width=".5"/><circle cx="7.5" cy="4.2" r="1.3" fill="#fff"/><rect x="6.4" y="6.2" width="2.2" height="5.8" fill="#fff"/></svg>
<div class="t" style="left:1682.5px;top:722.84px;font-size:12px;line-height:12px;color:#222;letter-spacing:0.38px;">System successfully started Web S...</div>
<svg class="b" style="left:1612px;top:644px;" width="18" height="12" viewBox="0 0 18 12"><path d="M3,9 L9,3.5 L15,9" fill="none" stroke="#a8acb4" stroke-width="2.4"/></svg>
<div class="t" style="left:1621px;transform:translateX(-50%);top:671.84px;font-size:12px;line-height:12px;color:#222;letter-spacing:0.3px;">1/5</div>
<svg class="b" style="left:1612px;top:694px;" width="18" height="12" viewBox="0 0 18 12"><path d="M3,3 L9,8.5 L15,3" fill="none" stroke="#333" stroke-width="2.4"/></svg>
<svg class="b" style="left:1599px;top:760px;" width="28" height="28" viewBox="0 0 28 28"><g fill="none" stroke="#2a2a2a" stroke-width="2.6"><rect x="2" y="5" width="14" height="7.5" rx="3.75" transform="rotate(42 9 8.75)"/><rect x="11" y="15" width="14" height="7.5" rx="3.75" transform="rotate(42 18 18.75)"/></g><g fill="none" stroke="#bbb" stroke-width=".8"><rect x="4" y="7" width="10" height="3.5" rx="1.75" transform="rotate(42 9 8.75)"/><rect x="13" y="17" width="10" height="3.5" rx="1.75" transform="rotate(42 18 18.75)"/></g></svg>
<div class="t" style="left:1639.3px;top:766.42px;font-size:12.5px;line-height:12.5px;color:#12427e;font-weight:bold;letter-spacing:0.7px;">Connessioni correnti</div>
<div class="b" style="left:1592px;top:793px;width:317px;height:137px;background:linear-gradient(180deg,#f4f5f8 0%,#eaecf2 35%,#c4c8da 100%);border:1px solid #4e586a;border-radius:5px"></div>
<div class="b" style="left:1647px;top:825px;width:253px;height:97px;background:#fff"></div>
<svg class="b" style="left:1653px;top:804px;" width="16" height="16" viewBox="0 0 16 16"><circle cx="8" cy="5" r="3.6" fill="#444"/><path d="M1,15.5 Q1.5,10 6,9.5 L10,9.5 Q14.5,10 15,15.5 Z" fill="#444"/></svg>
<div class="t" style="left:1671.3px;top:806.24px;font-size:12px;line-height:12px;color:#222;letter-spacing:0.45px;">admin</div>
<div class="t" style="left:1718.2px;top:806.24px;font-size:12px;line-height:12px;color:#222;letter-spacing:0.45px;">HTTP</div>
<div class="t" style="left:1772.2px;top:806.24px;font-size:12px;line-height:12px;color:#222;letter-spacing:0.45px;">00:27:27</div>
<svg class="b" style="left:1873px;top:805px;" width="20" height="15" viewBox="0 0 20 15"><path d="M3,12 L7,8 L5,6 L9,2 L13,6 L9,10 L7,8" fill="#222"/><path d="M2,13 L5,10" stroke="#222" stroke-width="1.6"/><circle cx="14.5" cy="10.5" r="3.2" fill="none" stroke="#e03030" stroke-width="1.3"/><path d="M12.5,8.5 L16.5,12.5" stroke="#e03030" stroke-width="1.2"/></svg>
<svg class="b" style="left:1612px;top:824px;" width="18" height="12" viewBox="0 0 18 12"><path d="M3,9 L9,3.5 L15,9" fill="none" stroke="#a8acb4" stroke-width="2.4"/></svg>
<div class="t" style="left:1621px;transform:translateX(-50%);top:851.84px;font-size:12px;line-height:12px;color:#222;letter-spacing:0.3px;">1/1</div>
<svg class="b" style="left:1612px;top:874px;" width="18" height="12" viewBox="0 0 18 12"><path d="M3,3 L9,8.5 L15,3" fill="none" stroke="#a8acb4" stroke-width="2.4"/></svg>
<svg class="b" style="left:1840px;top:936px;" width="80" height="23" viewBox="0 0 80 23"><path d="M11,23 L31,2.5 L80,2.5 L80,23 Z" fill="#f4f6fa" stroke="#c8ccd4" stroke-width="1"/><path d="M45,8 L52,15 L59,8" fill="none" stroke="#222" stroke-width="2.8"/></svg>
<svg class="b" style="left:1628px;top:888px;" width="292" height="71" viewBox="0 0 292 71"><defs><linearGradient id="wm" x1="0" y1="0" x2="1" y2="1"><stop offset="0" stop-color="#e8eefc"/><stop offset="1" stop-color="#7a90d8"/></linearGradient></defs><g opacity=".75"><rect x="12" y="6" width="55" height="55" rx="6" transform="rotate(10 39 33)" fill="url(#wm)" stroke="#b0bce0" stroke-width="1"/><path d="M28,26 L52,44 M52,24 L30,46" stroke="#f4f6fc" stroke-width="6" stroke-linecap="round"/></g><text x="75" y="45" font-family="Liberation Sans" font-size="22" fill="#5a6ea8" fill-opacity=".6" textLength="179" lengthAdjust="spacingAndGlyphs">xtremehardware.com</text></svg>
</body></html>
